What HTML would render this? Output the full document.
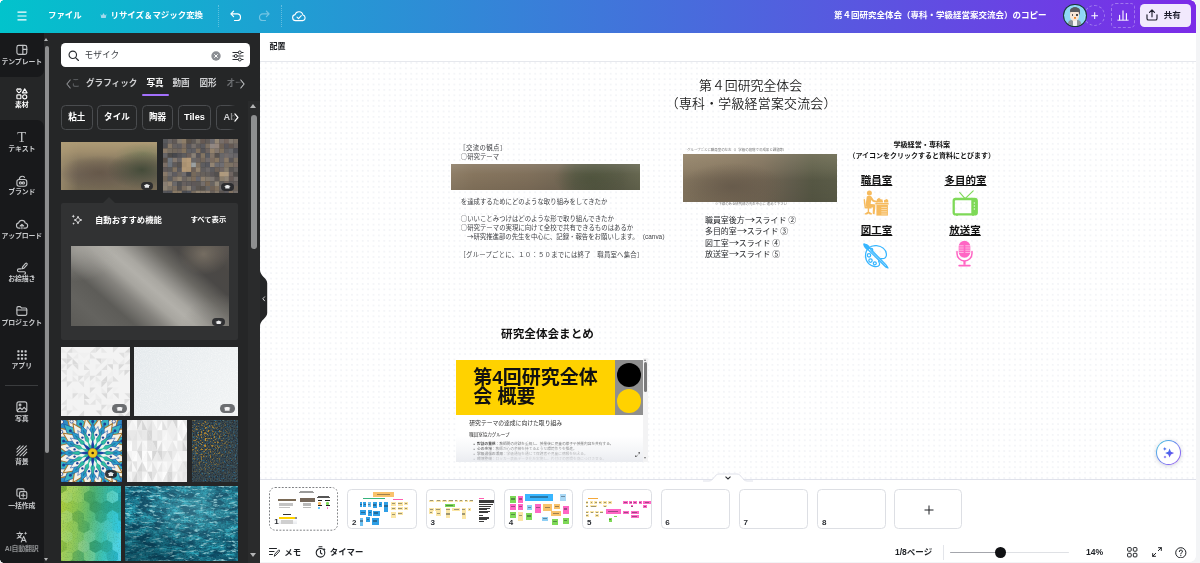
<!DOCTYPE html>
<html lang="ja">
<head>
<meta charset="utf-8">
<title>第４回研究全体会（専科・学級経営案交流会）のコピー</title>
<style>
*{box-sizing:border-box;margin:0;padding:0}
html,body{width:1200px;height:563px;overflow:hidden;background:#fff}
body{font-family:"Liberation Sans","Noto Sans CJK JP",sans-serif;color:#0e1318;position:relative}
.abs{position:absolute}
.t{position:absolute;white-space:nowrap;line-height:1}
#app{position:absolute;left:0;top:0;width:1200px;height:563px;overflow:hidden;will-change:transform}

/* top bar */
#top{left:0;top:0;width:1200px;height:33px;background:linear-gradient(90deg,#02c3cc 0%,#7c2be8 100%)}
#top .t{color:#fff;font-weight:700;font-size:8.450px}

/* left nav */
#nav{left:0;top:33px;width:43.5px;height:530px;background:#18191b}
.nv{position:absolute;left:0;width:43.5px;height:43.5px;background:#18191b}
.nv .lb{position:absolute;left:-10px;width:63.5px;text-align:center;font-size:6.9px;font-weight:700;color:#c9cbcd;line-height:1;white-space:nowrap;letter-spacing:-.1px}
.nv svg{position:absolute;left:15.900px;width:11.700px;height:11.700px;overflow:visible;margin-top:.6px}
.nv svg *{fill:none;stroke:#c3c5c7;stroke-width:1.250;stroke-linecap:round;stroke-linejoin:round}
.nv svg.act *{stroke:#fff}
#navsb{left:43.5px;top:33px;width:6.5px;height:530px;background:#252627}

/* panel */
#panel{left:50px;top:33px;width:210px;height:530px;background:#252627;overflow:hidden}

#search{left:11px;top:10px;width:189px;height:24px;background:#fff;border-radius:4.500px}
.tab{position:absolute;top:46px;font-size:8.600px;font-weight:700;color:#d0d1d3;line-height:1;white-space:nowrap}
.chip{position:absolute;top:72px;height:24.500px;border:1px solid #4a4c4f;border-radius:4.500px;color:#fff;font-size:8.600px;font-weight:700;line-height:22.500px;text-align:center;white-space:nowrap}
.pi{position:absolute;overflow:hidden}
.pro{position:absolute;width:12.800px;height:8.200px;border-radius:4.100px;background:rgba(36,38,41,.88)}
.pro:after{content:"";position:absolute;left:3.100px;top:2.200px;width:6.600px;height:3.900px;background:#e9eaeb;clip-path:polygon(50% 0,100% 40%,82% 55%,82% 100%,18% 100%,18% 55%,0 40%)}
.pro2{position:absolute;width:15px;height:8.700px;border-radius:4.400px;background:rgba(96,98,101,.92)}
.pro2:after{content:"";position:absolute;left:4.200px;top:2.300px;width:7px;height:4.200px;background:#f4f4f5;clip-path:polygon(50% 0,100% 32%,84% 45%,84% 100%,16% 100%,16% 45%,0 32%)}

/* editor */
#editor{left:260px;top:33px;width:940px;height:530px;background:#fff}
#tb{left:0;top:0;width:940px;height:28.500px;background:#fff;border-bottom:1px solid #e6e8ed}
#cv{left:0;top:28.500px;width:940px;height:418.500px;overflow:hidden;background-color:#fff;background-image:radial-gradient(circle,#eef0f4 0,#eef0f4 .5px,rgba(238,240,244,0) .95px);background-size:5.400px 5.400px;background-position:3px -1.750px}
#cv .t{color:#16181c;text-spacing-trim:space-all}
.sy{font-family:"Noto Sans CJK JP","Liberation Sans",sans-serif}
#strip{left:0;top:446px;width:940px;height:83px;overflow:visible;background:#fff;border-top:1px solid #dfe1ea}
.th{position:absolute;top:9.400px;width:69.400px;height:39.200px;border:1px solid #dddfe4;border-radius:4.500px;background:#fff;overflow:hidden}
.th b{position:absolute;left:3.800px;bottom:1px;font-size:8px;font-weight:700;color:#2c2f34;line-height:1}
.sq{position:absolute}
</style>
</head>
<body>
<div id="app">

<!-- ================= TOP BAR ================= -->
<div id="top" class="abs">
  <svg class="abs" style="left:16.5px;top:10.5px" width="10" height="10" viewBox="0 0 10 10"><path d="M.5 1.2h9M.5 5h9M.5 8.8h9" stroke="#fff" stroke-width="1.2" fill="none"/></svg>
  <div class="t" style="left:48px;top:11px">ファイル</div>
  <svg class="abs" style="left:100px;top:11.5px" width="7" height="7" viewBox="0 0 14 14"><path d="M1 4l3 3 3-5 3 5 3-3-1.4 8H2.4z" fill="#d6e4f5" opacity=".75"/></svg>
  <div class="t" style="left:110.5px;top:11px">リサイズ＆マジック変換</div>
  <div class="abs" style="left:217.500px;top:5px;width:0;height:22px;border-left:1px dotted rgba(255,255,255,.3)"></div>
  <svg class="abs" style="left:229.5px;top:10px" width="12" height="12" viewBox="0 0 12 12"><path d="M3.6 1.2L.9 3.9l2.7 2.7M1.2 3.9h6a3.3 3.3 0 010 6.6H4.5" stroke="#fff" stroke-width="1.2" fill="none" stroke-linecap="round" stroke-linejoin="round"/></svg>
  <svg class="abs" style="left:257.5px;top:10px;opacity:.38" width="12" height="12" viewBox="0 0 12 12"><path d="M8.4 1.2l2.7 2.7-2.7 2.7M10.8 3.9h-6a3.3 3.3 0 000 6.6H7.5" stroke="#fff" stroke-width="1.2" fill="none" stroke-linecap="round" stroke-linejoin="round"/></svg>
  <div class="abs" style="left:281px;top:5px;width:0;height:22px;border-left:1px dotted rgba(255,255,255,.3)"></div>
  <svg class="abs" style="left:291.5px;top:9.5px" width="14" height="12" viewBox="0 0 14 12"><path d="M3.6 10.6a3 3 0 01-.5-5.95A4 4 0 0110.9 5a2.85 2.85 0 01-.3 5.6z" stroke="#fff" stroke-width="1.1" fill="none" stroke-linejoin="round"/><path d="M5 7.2l1.5 1.5 2.8-3" stroke="#fff" stroke-width="1.1" fill="none" stroke-linecap="round" stroke-linejoin="round"/></svg>

  <div class="t" style="left:834px;top:10.700px;font-size:8.500px;text-spacing-trim:space-all">第４回研究全体会（専科・学級経営案交流会）のコピー</div>
<div class="abs" style="left:1063.100px;top:3.700px;width:23.800px;height:23.800px;border-radius:50%;background:#173a34;overflow:hidden">
    <div class="abs" style="left:1.100px;top:1.100px;width:21.600px;height:21.600px;border-radius:50%;background:#8fd8f7;overflow:hidden">
      <div class="abs" style="left:4.300px;top:15.400px;width:13px;height:9px;border-radius:4px 4px 0 0;background:#8d939b"></div>
      <div class="abs" style="left:8.800px;top:15px;width:4px;height:7px;background:#f4f4f4"></div>
      <div class="abs" style="left:5.400px;top:2.600px;width:10.800px;height:8px;border-radius:5px 5px 2px 2px;background:#5a5d61"></div>
      <div class="abs" style="left:6.300px;top:5.700px;width:9px;height:10.200px;border-radius:4px 4px 4.500px 4.500px;background:#f6e6d6"></div>
      <div class="abs" style="left:6px;top:3.400px;width:9.600px;height:3.800px;border-radius:4px 4px 1px 1px;background:#5a5d61"></div>
      <div class="abs" style="left:8px;top:9.300px;width:1.200px;height:1.600px;border-radius:50%;background:#333"></div>
      <div class="abs" style="left:12.300px;top:9.300px;width:1.200px;height:1.600px;border-radius:50%;background:#333"></div>
      <div class="abs" style="left:9.700px;top:12.600px;width:2.400px;height:2px;border-radius:0 0 1.200px 1.200px;background:#f08a2c"></div>
    </div>
  </div>
  <div class="abs" style="left:1083.800px;top:5px;width:21.200px;height:21.200px;border-radius:50%;border:1px dashed rgba(255,255,255,.32)"></div>
  <svg class="abs" style="left:1090.800px;top:12px" width="7.400" height="7.400" viewBox="0 0 8 8"><path d="M4 .4v7.200M.4 4h7.200" stroke="#fff" stroke-width="1.100"/></svg>
  <div class="abs" style="left:1111.200px;top:3.200px;width:23.800px;height:24.400px;border-radius:4.500px;border:1px dashed rgba(255,255,255,.32)"></div>
  <svg class="abs" style="left:1117px;top:9.600px" width="12" height="11" viewBox="0 0 12 11"><path d="M.4 10.200h11.200" stroke="#fff" stroke-width=".9"/><path d="M2.600 9.800V5.200M6 9.800V.8M9.400 9.800V3.600" stroke="#fff" stroke-width="1.100" stroke-linecap="round"/></svg>
  <div class="abs" style="left:1140px;top:3.800px;width:51px;height:23.600px;border-radius:4.500px;background:#f1e9fd"></div>
  <svg class="abs" style="left:1146px;top:9.400px" width="12" height="12" viewBox="0 0 12 12"><path d="M1 5.800v3.600A1.600 1.600 0 002.600 11h6.800A1.600 1.600 0 0011 9.400V5.800M6 7.800V1M3.500 3.400L6 .9l2.500 2.500" fill="none" stroke="#1d1d2b" stroke-width="1.150" stroke-linecap="round" stroke-linejoin="round"/></svg>
  <div class="t" style="left:1163.800px;top:11.100px;font-size:8.500px;color:#1d1d2b">共有</div>
</div>

<!-- ================= LEFT NAV ================= -->
<div id="nav" class="abs">
<div class="abs" style="left:0;top:0;width:43.5px;height:131px;background:#252627"></div>
<div class="nv" style="top:0px;border-bottom-right-radius:7px;"><svg viewBox="0 0 13 13" style="top:10.500px"><rect x="1" y="1.5" width="11" height="10" rx="2"/><path d="M7.6 1.5v10M7.6 6h4.4"/></svg><div class="lb" style="top:25.500px;color:#c9cbcd">テンプレート</div></div>
<div class="nv" style="top:43.5px;background:transparent;"><svg class="act" viewBox="0 0 13 13" style="top:10.500px"><path d="M3.3 5.4C1.9 4.3.9 3.5.9 2.4A1.2 1.2 0 013.3 1.9 1.2 1.2 0 015.7 2.4C5.7 3.5 4.7 4.3 3.3 5.4z"/><path d="M9.7 1l2.6 4.4H7.1z"/><rect x="1" y="7.6" width="4.4" height="4.4" rx=".6"/><circle cx="9.7" cy="9.8" r="2.3"/></svg><div class="lb" style="top:25.500px;color:#fff">素材</div></div>
<div class="nv" style="top:87px;border-top-right-radius:7px;"><div class="t" style="left:0;width:43.5px;text-align:center;top:10px;font-family:'Liberation Serif',serif;font-size:14.600px;color:#bfc1c3">T</div><div class="lb" style="top:25.500px;color:#c9cbcd">テキスト</div></div>
<div class="nv" style="top:130.5px;"><svg viewBox="0 0 13 13" style="top:10.500px"><rect x="1" y="5" width="11" height="7.5" rx="2.4"/><path d="M3.6 5c.2-2.2 1.6-3.6 3.4-3.6 1 0 1.9.4 2.5 1.200"/><circle cx="5" cy="8.8" r="1.2"/><circle cx="8.2" cy="8.8" r="1.2"/></svg><div class="lb" style="top:25.500px;color:#c9cbcd">ブランド</div></div>
<div class="nv" style="top:174px;"><svg viewBox="0 0 13 13" style="top:10.500px"><path d="M4.6 11.2H3.4a2.9 2.9 0 01-.5-5.75A3.8 3.8 0 0110.300 5.600 2.800 2.800 0 0110 11.200H8.600"/><path d="M6.6 12V7.200M4.700 8.900l1.900-1.900 1.900 1.900"/></svg><div class="lb" style="top:25.500px;color:#c9cbcd">アップロード</div></div>
<div class="nv" style="top:217.5px;"><svg viewBox="0 0 13 13" style="top:10.500px"><path d="M7.300 5.300l3.300-3.700a1.100 1.100 0 011.600 1.500L8.900 6.800l-2 .6z"/><path d="M5.800 7.600H3.200a1.600 1.600 0 000 3.200H9.300a1.300 1.300 0 010 2.600"/></svg><div class="lb" style="top:25.500px;color:#c9cbcd">お絵描き</div></div>
<div class="nv" style="top:261px;"><svg viewBox="0 0 13 13" style="top:10.500px"><path d="M1 3.200a1.400 1.400 0 011.400-1.400h2.300l1.300 1.500h4.600A1.400 1.400 0 0112 4.700v5.400a1.400 1.400 0 01-1.400 1.400H2.400A1.400 1.400 0 011 10.100z"/><path d="M1 5.600h11"/></svg><div class="lb" style="top:25.500px;color:#c9cbcd">プロジェクト</div></div>
<div class="nv" style="top:304.5px;"><svg viewBox="0 0 13 13" style="top:10.500px"><rect x="1.5" y="1.5" width="2.400" height="2.400" rx=".5" style="fill:#c9cbcd;stroke:none"/><rect x="1.5" y="5.5" width="2.400" height="2.400" rx=".5" style="fill:#c9cbcd;stroke:none"/><rect x="1.5" y="9.5" width="2.400" height="2.400" rx=".5" style="fill:#c9cbcd;stroke:none"/><rect x="5.5" y="1.5" width="2.400" height="2.400" rx=".5" style="fill:#c9cbcd;stroke:none"/><rect x="5.5" y="5.5" width="2.400" height="2.400" rx=".5" style="fill:#c9cbcd;stroke:none"/><rect x="5.5" y="9.5" width="2.400" height="2.400" rx=".5" style="fill:#c9cbcd;stroke:none"/><rect x="9.5" y="1.5" width="2.400" height="2.400" rx=".5" style="fill:#c9cbcd;stroke:none"/><rect x="9.5" y="5.5" width="2.400" height="2.400" rx=".5" style="fill:#c9cbcd;stroke:none"/><rect x="9.5" y="9.5" width="2.400" height="2.400" rx=".5" style="fill:#c9cbcd;stroke:none"/></svg><div class="lb" style="top:25.500px;color:#c9cbcd">アプリ</div></div>
<div class="nv" style="top:357px;height:44px;"><svg viewBox="0 0 13 13" style="top:10.500px"><rect x="1" y="1" width="11" height="11" rx="2.200"/><circle cx="4.500" cy="4.500" r="1"/><path d="M1.500 10.500l3-3 2.200 2.200 2.300-2.700 3 3.200"/></svg><div class="lb" style="top:25.500px;color:#c9cbcd">写真</div></div>
<div class="nv" style="top:400.5px;"><svg viewBox="0 0 13 13" style="top:10.500px"><path d="M1 4.500L4.500 1M1 8L8 1M1 11.500L11.500 1M4.500 12L12 4.500M8 12l4-4" style="stroke-width:1.200"/></svg><div class="lb" style="top:25.500px;color:#c9cbcd">背景</div></div>
<div class="nv" style="top:444px;"><svg viewBox="0 0 13 13" style="top:10.500px"><rect x="4" y="4" width="8" height="8" rx="1.600"/><path d="M2.500 9H2.200A1.200 1.200 0 011 7.800V2.200A1.200 1.200 0 012.200 1h5.600A1.200 1.200 0 019 2.200v.3"/><path d="M8 6v4M6 8h4"/></svg><div class="lb" style="top:25.500px;color:#c9cbcd">一括作成</div></div>
<div class="nv" style="top:487.29999999999995px;height:43px;"><svg viewBox="0 0 13 13" style="top:10.500px"><path d="M1 2.800h6.400M4.200 1.200v1.600M6.200 2.800C5.700 5 3.600 7.200 1.200 8M2.500 4.600c.8 1.500 2 2.600 3.500 3.300" style="stroke-width:1.200"/><path d="M5.800 12.300L8.500 6l2.700 6.300M6.700 10.400h3.600" style="stroke-width:1.200"/><path d="M10.700.6l.55 1.350 1.350.55-1.350.55-.55 1.350-.55-1.350-1.350-.55 1.350-.55z" style="fill:#c9cbcd;stroke:none"/></svg><div class="lb" style="top:25.500px;color:#8f9193">AI自動翻訳</div></div>
<div class="abs" style="left:4.500px;top:352.400px;width:33.500px;height:1px;background:#3a3c3e"></div>
</div>
<div id="navsb" class="abs">
  <div class="abs" style="left:.6px;top:4.800px;width:0;height:0;border-left:2.900px solid transparent;border-right:2.900px solid transparent;border-bottom:3.200px solid #b4b5b6"></div>
  <div class="abs" style="left:1.400px;top:12.600px;width:4px;height:407px;border-radius:2px;background:#8e8f90"></div>
  <div class="abs" style="left:.6px;top:524.500px;width:0;height:0;border-left:2.900px solid transparent;border-right:2.900px solid transparent;border-top:3.200px solid #b4b5b6"></div>
</div>

<!-- ================= SIDE PANEL ================= -->
<div id="panel" class="abs">
  <div id="search" class="abs">
    <svg class="abs" style="left:6.500px;top:6.500px" width="11.500" height="11.500" viewBox="0 0 12 12"><circle cx="5" cy="5" r="3.900" fill="none" stroke="#2a2d31" stroke-width="1.200"/><path d="M7.900 7.900l3 3" stroke="#2a2d31" stroke-width="1.300" stroke-linecap="round"/></svg>
    <div class="t" style="left:23.500px;top:7.600px;font-size:8.700px;color:#3a3d42">モザイク</div>
    <svg class="abs" style="left:149.500px;top:7.500px" width="10" height="10" viewBox="0 0 10 10"><circle cx="5" cy="5" r="4.700" fill="#8b8e93"/><path d="M3.300 3.300l3.400 3.400M6.700 3.300L3.300 6.700" stroke="#fff" stroke-width="1"/></svg>
    <svg class="abs" style="left:170.500px;top:6.500px" width="12" height="12" viewBox="0 0 12 12"><path d="M.5 2.500h11M.5 6h11M.5 9.500h11" stroke="#2a2d31" stroke-width="1" fill="none"/><circle cx="7.800" cy="2.500" r="1.500" fill="#fff" stroke="#2a2d31"/><circle cx="3.800" cy="6" r="1.500" fill="#fff" stroke="#2a2d31"/><circle cx="7.800" cy="9.500" r="1.500" fill="#fff" stroke="#2a2d31"/></svg>
  </div>
  <!-- tabs -->
  <svg class="abs" style="left:16.200px;top:45.500px" width="5" height="10" viewBox="0 0 5 10"><path d="M4.200 1L.9 5l3.300 4" fill="none" stroke="#8f9194" stroke-width="1.100" stroke-linecap="round" stroke-linejoin="round"/></svg>
  <div class="tab" style="left:21.500px;color:#55575a">こ</div>
  <div class="tab" style="left:36px">グラフィック</div>
  <div class="tab" style="left:96.500px;color:#fff">写真</div>
  <div class="tab" style="left:122.500px">動画</div>
  <div class="tab" style="left:149.500px">図形</div>
  <div class="tab" style="left:176.500px;color:#6d6f72">オー</div>
  <div class="abs" style="left:184px;top:38px;width:16px;height:22px;background:linear-gradient(90deg,rgba(37,38,39,0),#252627 60%)"></div>
  <svg class="abs" style="left:190.200px;top:45.500px" width="5" height="10" viewBox="0 0 5 10"><path d="M.8 1l3.300 4L.8 9" fill="none" stroke="#c4c6c8" stroke-width="1.100" stroke-linecap="round" stroke-linejoin="round"/></svg>
  <div class="abs" style="left:92px;top:61.200px;width:27px;height:1.600px;border-radius:1px;background:#a370fc"></div>
  <!-- chips -->
  <div class="chip" style="left:11px;width:31.500px">粘土</div>
  <div class="chip" style="left:47px;width:40px">タイル</div>
  <div class="chip" style="left:92px;width:31px">陶器</div>
  <div class="chip" style="left:128px;width:33px;font-size:9.200px">Tiles</div>
  <div class="chip" style="left:166px;width:52px;text-align:left;padding-left:6.500px;color:#cfd0d2;overflow:hidden;font-size:9.200px">Abstract</div>
  <div class="abs" style="left:179px;top:70px;width:21px;height:28px;background:linear-gradient(90deg,rgba(37,38,39,0),#252627 30%)"></div>
  <svg class="abs" style="left:184.200px;top:80px" width="5" height="9" viewBox="0 0 5 9"><path d="M.9 .9l3 3.600-3 3.600" fill="none" stroke="#fff" stroke-width="1.200" stroke-linecap="round" stroke-linejoin="round"/></svg>
  <div class="pi" style="left:11px;top:108.600px;width:96.200px;height:48.500px;background:
radial-gradient(ellipse 36% 40% at 84% 58%,rgba(66,74,56,.96),rgba(66,74,56,0) 100%),
radial-gradient(ellipse 30% 22% at 86% 24%,rgba(112,126,88,.5),rgba(112,126,88,0) 100%),
radial-gradient(ellipse 42% 36% at 40% 64%,rgba(100,86,72,.9),rgba(100,86,72,0) 100%),
linear-gradient(90deg,rgba(176,158,120,.55) 0%,rgba(176,158,120,0) 18%),
linear-gradient(180deg,#ae9b76 0%,#a08e6d 20%,#85775f 42%,#74685a 68%,#766a54 100%)"></div>
  <div class="pro" style="left:90.500px;top:148.700px"></div>
  <svg class="pi" style="left:113px;top:106.400px" width="75.200" height="53.900" viewBox="0 0 75.200 53.900"><rect x="0" y="0" width="4.9" height="4.9" fill="#57585b"/><rect x="4.7" y="0" width="4.9" height="4.9" fill="#6a6564"/><rect x="9.4" y="0" width="4.9" height="4.9" fill="#615a57"/><rect x="14.1" y="0" width="4.9" height="4.9" fill="#847b6f"/><rect x="18.8" y="0" width="4.9" height="4.9" fill="#8d7d68"/><rect x="23.5" y="0" width="4.9" height="4.9" fill="#5c534a"/><rect x="28.2" y="0" width="4.9" height="4.9" fill="#5e5956"/><rect x="32.9" y="0" width="4.9" height="4.9" fill="#797167"/><rect x="37.6" y="0" width="4.9" height="4.9" fill="#655953"/><rect x="42.3" y="0" width="4.9" height="4.9" fill="#615b58"/><rect x="47" y="0" width="4.9" height="4.9" fill="#6c6a6e"/><rect x="51.7" y="0" width="4.9" height="4.9" fill="#958876"/><rect x="56.4" y="0" width="4.9" height="4.9" fill="#776e6a"/><rect x="61.1" y="0" width="4.9" height="4.9" fill="#73655e"/><rect x="65.8" y="0" width="4.9" height="4.9" fill="#817970"/><rect x="70.5" y="0" width="4.9" height="4.9" fill="#796f65"/><rect x="0" y="4.7" width="4.9" height="4.9" fill="#535255"/><rect x="4.7" y="4.7" width="4.9" height="4.9" fill="#867867"/><rect x="9.4" y="4.7" width="4.9" height="4.9" fill="#676261"/><rect x="14.1" y="4.7" width="4.9" height="4.9" fill="#625f60"/><rect x="18.8" y="4.7" width="4.9" height="4.9" fill="#7c6e62"/><rect x="23.5" y="4.7" width="4.9" height="4.9" fill="#5a585b"/><rect x="28.2" y="4.7" width="4.9" height="4.9" fill="#766f6b"/><rect x="32.9" y="4.7" width="4.9" height="4.9" fill="#615c5b"/><rect x="37.6" y="4.7" width="4.9" height="4.9" fill="#5c5b5f"/><rect x="42.3" y="4.7" width="4.9" height="4.9" fill="#7c7063"/><rect x="47" y="4.7" width="4.9" height="4.9" fill="#5c5f67"/><rect x="51.7" y="4.7" width="4.9" height="4.9" fill="#665952"/><rect x="56.4" y="4.7" width="4.9" height="4.9" fill="#6d6156"/><rect x="61.1" y="4.7" width="4.9" height="4.9" fill="#5b585c"/><rect x="65.8" y="4.7" width="4.9" height="4.9" fill="#645953"/><rect x="70.5" y="4.7" width="4.9" height="4.9" fill="#6c6561"/><rect x="0" y="9.4" width="4.9" height="4.9" fill="#8a7a68"/><rect x="4.7" y="9.4" width="4.9" height="4.9" fill="#776e63"/><rect x="9.4" y="9.4" width="4.9" height="4.9" fill="#72685d"/><rect x="14.1" y="9.4" width="4.9" height="4.9" fill="#6f6660"/><rect x="18.8" y="9.4" width="4.9" height="4.9" fill="#83735e"/><rect x="23.5" y="9.4" width="4.9" height="4.9" fill="#616063"/><rect x="28.2" y="9.4" width="4.9" height="4.9" fill="#605f63"/><rect x="32.9" y="9.4" width="4.9" height="4.9" fill="#807160"/><rect x="37.6" y="9.4" width="4.9" height="4.9" fill="#565558"/><rect x="42.3" y="9.4" width="4.9" height="4.9" fill="#6d6460"/><rect x="47" y="9.4" width="4.9" height="4.9" fill="#94836d"/><rect x="51.7" y="9.4" width="4.9" height="4.9" fill="#81776f"/><rect x="56.4" y="9.4" width="4.9" height="4.9" fill="#7e705f"/><rect x="61.1" y="9.4" width="4.9" height="4.9" fill="#646162"/><rect x="65.8" y="9.4" width="4.9" height="4.9" fill="#69696c"/><rect x="70.5" y="9.4" width="4.9" height="4.9" fill="#4e4f55"/><rect x="0" y="14.1" width="4.9" height="4.9" fill="#686668"/><rect x="4.7" y="14.1" width="4.9" height="4.9" fill="#4d4a48"/><rect x="9.4" y="14.1" width="4.9" height="4.9" fill="#47484d"/><rect x="14.1" y="14.1" width="4.9" height="4.9" fill="#535256"/><rect x="18.8" y="14.1" width="4.9" height="4.9" fill="#5d5c5e"/><rect x="23.5" y="14.1" width="4.9" height="4.9" fill="#6b605c"/><rect x="28.2" y="14.1" width="4.9" height="4.9" fill="#898076"/><rect x="32.9" y="14.1" width="4.9" height="4.9" fill="#59565a"/><rect x="37.6" y="14.1" width="4.9" height="4.9" fill="#837563"/><rect x="42.3" y="14.1" width="4.9" height="4.9" fill="#595b61"/><rect x="47" y="14.1" width="4.9" height="4.9" fill="#817467"/><rect x="51.7" y="14.1" width="4.9" height="4.9" fill="#57524f"/><rect x="56.4" y="14.1" width="4.9" height="4.9" fill="#69686a"/><rect x="61.1" y="14.1" width="4.9" height="4.9" fill="#736c6b"/><rect x="65.8" y="14.1" width="4.9" height="4.9" fill="#6b696c"/><rect x="70.5" y="14.1" width="4.9" height="4.9" fill="#666467"/><rect x="0" y="18.8" width="4.9" height="4.9" fill="#5a5049"/><rect x="4.7" y="18.8" width="4.9" height="4.9" fill="#726b68"/><rect x="9.4" y="18.8" width="4.9" height="4.9" fill="#83786e"/><rect x="14.1" y="18.8" width="4.9" height="4.9" fill="#696566"/><rect x="18.8" y="18.8" width="4.9" height="4.9" fill="#696666"/><rect x="23.5" y="18.8" width="4.9" height="4.9" fill="#857b6e"/><rect x="28.2" y="18.8" width="4.9" height="4.9" fill="#696768"/><rect x="32.9" y="18.8" width="4.9" height="4.9" fill="#6b6360"/><rect x="37.6" y="18.8" width="4.9" height="4.9" fill="#74685c"/><rect x="42.3" y="18.8" width="4.9" height="4.9" fill="#716b6b"/><rect x="47" y="18.8" width="4.9" height="4.9" fill="#7b6d61"/><rect x="51.7" y="18.8" width="4.9" height="4.9" fill="#877763"/><rect x="56.4" y="18.8" width="4.9" height="4.9" fill="#6c686a"/><rect x="61.1" y="18.8" width="4.9" height="4.9" fill="#8a7b69"/><rect x="65.8" y="18.8" width="4.9" height="4.9" fill="#5a575a"/><rect x="70.5" y="18.8" width="4.9" height="4.9" fill="#7a7064"/><rect x="0" y="23.5" width="4.9" height="4.9" fill="#7b6f66"/><rect x="4.7" y="23.5" width="4.9" height="4.9" fill="#645f5c"/><rect x="9.4" y="23.5" width="4.9" height="4.9" fill="#5f5b5b"/><rect x="14.1" y="23.5" width="4.9" height="4.9" fill="#585451"/><rect x="18.8" y="23.5" width="4.9" height="4.9" fill="#48484c"/><rect x="23.5" y="23.5" width="4.9" height="4.9" fill="#7b7067"/><rect x="28.2" y="23.5" width="4.9" height="4.9" fill="#625b57"/><rect x="32.9" y="23.5" width="4.9" height="4.9" fill="#817363"/><rect x="37.6" y="23.5" width="4.9" height="4.9" fill="#5e5d60"/><rect x="42.3" y="23.5" width="4.9" height="4.9" fill="#58585e"/><rect x="47" y="23.5" width="4.9" height="4.9" fill="#928473"/><rect x="51.7" y="23.5" width="4.9" height="4.9" fill="#6d6c70"/><rect x="56.4" y="23.5" width="4.9" height="4.9" fill="#6f6e72"/><rect x="61.1" y="23.5" width="4.9" height="4.9" fill="#807365"/><rect x="65.8" y="23.5" width="4.9" height="4.9" fill="#7d7264"/><rect x="70.5" y="23.5" width="4.9" height="4.9" fill="#786b64"/><rect x="0" y="28.2" width="4.9" height="4.9" fill="#625b5a"/><rect x="4.7" y="28.2" width="4.9" height="4.9" fill="#5d5b5b"/><rect x="9.4" y="28.2" width="4.9" height="4.9" fill="#827462"/><rect x="14.1" y="28.2" width="4.9" height="4.9" fill="#5c5b5f"/><rect x="18.8" y="28.2" width="4.9" height="4.9" fill="#7a6f66"/><rect x="23.5" y="28.2" width="4.9" height="4.9" fill="#665e5a"/><rect x="28.2" y="28.2" width="4.9" height="4.9" fill="#6d625a"/><rect x="32.9" y="28.2" width="4.9" height="4.9" fill="#93836e"/><rect x="37.6" y="28.2" width="4.9" height="4.9" fill="#615e5f"/><rect x="42.3" y="28.2" width="4.9" height="4.9" fill="#6d6969"/><rect x="47" y="28.2" width="4.9" height="4.9" fill="#5c5b5e"/><rect x="51.7" y="28.2" width="4.9" height="4.9" fill="#6c6158"/><rect x="56.4" y="28.2" width="4.9" height="4.9" fill="#726865"/><rect x="61.1" y="28.2" width="4.9" height="4.9" fill="#867c6d"/><rect x="65.8" y="28.2" width="4.9" height="4.9" fill="#5a5655"/><rect x="70.5" y="28.2" width="4.9" height="4.9" fill="#676361"/><rect x="0" y="32.9" width="4.9" height="4.9" fill="#887969"/><rect x="4.7" y="32.9" width="4.9" height="4.9" fill="#736f6e"/><rect x="9.4" y="32.9" width="4.9" height="4.9" fill="#5e5c60"/><rect x="14.1" y="32.9" width="4.9" height="4.9" fill="#6e6660"/><rect x="18.8" y="32.9" width="4.9" height="4.9" fill="#6f6b6c"/><rect x="23.5" y="32.9" width="4.9" height="4.9" fill="#494a50"/><rect x="28.2" y="32.9" width="4.9" height="4.9" fill="#776a5b"/><rect x="32.9" y="32.9" width="4.9" height="4.9" fill="#6d655f"/><rect x="37.6" y="32.9" width="4.9" height="4.9" fill="#67615c"/><rect x="42.3" y="32.9" width="4.9" height="4.9" fill="#645f5c"/><rect x="47" y="32.9" width="4.9" height="4.9" fill="#5b5657"/><rect x="51.7" y="32.9" width="4.9" height="4.9" fill="#53504f"/><rect x="56.4" y="32.9" width="4.9" height="4.9" fill="#675e54"/><rect x="61.1" y="32.9" width="4.9" height="4.9" fill="#616164"/><rect x="65.8" y="32.9" width="4.9" height="4.9" fill="#6f6561"/><rect x="70.5" y="32.9" width="4.9" height="4.9" fill="#504c4a"/><rect x="0" y="37.6" width="4.9" height="4.9" fill="#74695c"/><rect x="4.7" y="37.6" width="4.9" height="4.9" fill="#5e5e61"/><rect x="9.4" y="37.6" width="4.9" height="4.9" fill="#7f7367"/><rect x="14.1" y="37.6" width="4.9" height="4.9" fill="#918472"/><rect x="18.8" y="37.6" width="4.9" height="4.9" fill="#6d6662"/><rect x="23.5" y="37.6" width="4.9" height="4.9" fill="#7a7267"/><rect x="28.2" y="37.6" width="4.9" height="4.9" fill="#7d6d5c"/><rect x="32.9" y="37.6" width="4.9" height="4.9" fill="#67676e"/><rect x="37.6" y="37.6" width="4.9" height="4.9" fill="#8e7f6d"/><rect x="42.3" y="37.6" width="4.9" height="4.9" fill="#81786d"/><rect x="47" y="37.6" width="4.9" height="4.9" fill="#7c7570"/><rect x="51.7" y="37.6" width="4.9" height="4.9" fill="#615b58"/><rect x="56.4" y="37.6" width="4.9" height="4.9" fill="#8b7e6c"/><rect x="61.1" y="37.6" width="4.9" height="4.9" fill="#918677"/><rect x="65.8" y="37.6" width="4.9" height="4.9" fill="#675c58"/><rect x="70.5" y="37.6" width="4.9" height="4.9" fill="#756e6b"/><rect x="0" y="42.3" width="4.9" height="4.9" fill="#897e72"/><rect x="4.7" y="42.3" width="4.9" height="4.9" fill="#958673"/><rect x="9.4" y="42.3" width="4.9" height="4.9" fill="#6a6869"/><rect x="14.1" y="42.3" width="4.9" height="4.9" fill="#515153"/><rect x="18.8" y="42.3" width="4.9" height="4.9" fill="#68615f"/><rect x="23.5" y="42.3" width="4.9" height="4.9" fill="#615d5d"/><rect x="28.2" y="42.3" width="4.9" height="4.9" fill="#5f5959"/><rect x="32.9" y="42.3" width="4.9" height="4.9" fill="#5e5a57"/><rect x="37.6" y="42.3" width="4.9" height="4.9" fill="#746e6b"/><rect x="42.3" y="42.3" width="4.9" height="4.9" fill="#786856"/><rect x="47" y="42.3" width="4.9" height="4.9" fill="#696461"/><rect x="51.7" y="42.3" width="4.9" height="4.9" fill="#918778"/><rect x="56.4" y="42.3" width="4.9" height="4.9" fill="#625f5e"/><rect x="61.1" y="42.3" width="4.9" height="4.9" fill="#756860"/><rect x="65.8" y="42.3" width="4.9" height="4.9" fill="#615c5c"/><rect x="70.5" y="42.3" width="4.9" height="4.9" fill="#655e5c"/><rect x="0" y="47" width="4.9" height="4.9" fill="#8c8273"/><rect x="4.7" y="47" width="4.9" height="4.9" fill="#7a7267"/><rect x="9.4" y="47" width="4.9" height="4.9" fill="#7b6e60"/><rect x="14.1" y="47" width="4.9" height="4.9" fill="#565250"/><rect x="18.8" y="47" width="4.9" height="4.9" fill="#7a6e61"/><rect x="23.5" y="47" width="4.9" height="4.9" fill="#8c8274"/><rect x="28.2" y="47" width="4.9" height="4.9" fill="#625f60"/><rect x="32.9" y="47" width="4.9" height="4.9" fill="#5b5550"/><rect x="37.6" y="47" width="4.9" height="4.9" fill="#59534d"/><rect x="42.3" y="47" width="4.9" height="4.9" fill="#676564"/><rect x="47" y="47" width="4.9" height="4.9" fill="#6f6257"/><rect x="51.7" y="47" width="4.9" height="4.9" fill="#7f705e"/><rect x="56.4" y="47" width="4.9" height="4.9" fill="#6b6869"/><rect x="61.1" y="47" width="4.9" height="4.9" fill="#585149"/><rect x="65.8" y="47" width="4.9" height="4.9" fill="#615e60"/><rect x="70.5" y="47" width="4.9" height="4.9" fill="#6b625a"/><rect x="0" y="51.7" width="4.9" height="4.9" fill="#555559"/><rect x="4.7" y="51.7" width="4.9" height="4.9" fill="#525359"/><rect x="9.4" y="51.7" width="4.9" height="4.9" fill="#887965"/><rect x="14.1" y="51.7" width="4.9" height="4.9" fill="#857663"/><rect x="18.8" y="51.7" width="4.9" height="4.9" fill="#4a4b50"/><rect x="23.5" y="51.7" width="4.9" height="4.9" fill="#4f525a"/><rect x="28.2" y="51.7" width="4.9" height="4.9" fill="#766b5e"/><rect x="32.9" y="51.7" width="4.9" height="4.9" fill="#8e8170"/><rect x="37.6" y="51.7" width="4.9" height="4.9" fill="#897d6f"/><rect x="42.3" y="51.7" width="4.9" height="4.9" fill="#8e8071"/><rect x="47" y="51.7" width="4.9" height="4.9" fill="#69615b"/><rect x="51.7" y="51.7" width="4.9" height="4.9" fill="#807568"/><rect x="56.4" y="51.7" width="4.9" height="4.9" fill="#5b5653"/><rect x="61.1" y="51.7" width="4.9" height="4.9" fill="#5b595d"/><rect x="65.8" y="51.7" width="4.9" height="4.9" fill="#827363"/><rect x="70.5" y="51.7" width="4.9" height="4.9" fill="#746d69"/><rect x="18.800" y="18.800" width="9.400" height="14.100" fill="#c0a27a" opacity=".8"/><rect x="56.400" y="32.900" width="9.400" height="4.700" fill="#c2a987" opacity=".8"/><rect x="28.200" y="23.500" width="4.700" height="4.700" fill="#aab2b4" opacity=".8"/><rect x="4.700" y="18.800" width="4.700" height="9.400" fill="#6f7a88" opacity=".7"/><rect x="47" y="4.700" width="9.400" height="4.700" fill="#a89a90" opacity=".7"/></svg>
  <div class="pro" style="left:171px;top:149.500px"></div>
  <div class="abs" style="left:52.800px;top:163.500px;width:0;height:0;border-left:6.500px solid transparent;border-right:6.500px solid transparent;border-bottom:6.500px solid #313233"></div>
  <div class="abs" style="left:11px;top:170px;width:177.400px;height:137.200px;background:#313233;border-radius:2px"></div>
  <svg class="abs" style="left:21px;top:180.500px" width="12" height="12" viewBox="0 0 12 12"><path d="M7 2.200l1.100 2.700 2.700 1.100-2.700 1.100L7 9.800 5.900 7.100 3.200 6l2.700-1.100z" fill="none" stroke="#e6e7e8" stroke-width=".9" stroke-linejoin="round"/><path d="M2.300.6l.5 1.200 1.200.5-1.200.5-.5 1.200-.5-1.200L.6 2.300l1.200-.5zM2.600 8.200l.4 1 1 .4-1 .4-.4 1-.4-1-1-.4 1-.4z" fill="#e6e7e8"/></svg>
  <div class="t" style="left:45px;top:182.600px;font-size:8.400px;font-weight:700;color:#fff">自動おすすめ機能</div>
  <div class="t" style="left:140.500px;top:183.200px;font-size:7.300px;font-weight:700;color:#fff">すべて表示</div>
  <div class="pi" style="left:20.500px;top:213.400px;width:158.200px;height:79.200px;background:
radial-gradient(ellipse 16% 26% at 84% 10%,rgba(132,122,108,.75),rgba(132,122,108,0) 100%),
radial-gradient(ellipse 26% 40% at 4% 4%,rgba(168,166,160,.7),rgba(168,166,160,0) 100%),
radial-gradient(ellipse 30% 40% at 100% 100%,rgba(120,118,113,.6),rgba(120,118,113,0) 100%),
linear-gradient(41deg,#5c5b57 0%,#64635f 14%,#5d5c58 26%,#85837e 37%,#a7a59f 44%,#b2b0aa 50%,#a9a7a1 55%,#8d8b86 61%,#6a6863 68%,#4a4846 77%,#4b4845 88%,#595450 100%)"></div>
  <div class="pro" style="left:162.300px;top:285.200px"></div>
  <svg class="pi" style="left:11px;top:313.6px" width="69.2" height="69.1" viewBox="0 0 69.2 69.1"><rect width="100" height="100" fill="#f3f3f3"/><path d="M0,0 5.77,5.77 0,5.77z" fill="#ececec"/><path d="M11.54,0 11.54,5.77 5.77,5.77z" fill="#dedede"/><path d="M11.54,0 17.31,5.77 11.54,5.77z" fill="#ececec"/><path d="M34.62,0 34.62,5.77 28.85,5.77z" fill="#e4e4e4"/><path d="M34.62,0 40.39,0 34.62,5.77z" fill="#dedede"/><path d="M40.39,0 46.16,5.77 40.39,5.77z" fill="#e8e8e8"/><path d="M51.93,0 57.7,0 51.93,5.77z" fill="#e0e0e0"/><path d="M69.24,0 69.24,5.77 63.47,5.77z" fill="#dadada"/><path d="M5.77,5.77 11.54,11.54 5.77,11.54z" fill="#dedede"/><path d="M17.31,5.77 17.31,11.54 11.54,11.54z" fill="#ececec"/><path d="M17.31,5.77 23.08,5.77 23.08,11.54z" fill="#f0f0f0"/><path d="M23.08,5.77 28.85,5.77 23.08,11.54z" fill="#f0f0f0"/><path d="M28.85,5.77 34.62,11.54 28.85,11.54z" fill="#e4e4e4"/><path d="M57.7,5.77 63.47,5.77 63.47,11.54z" fill="#e0e0e0"/><path d="M63.47,5.77 69.24,5.77 63.47,11.54z" fill="#ececec"/><path d="M0,11.54 5.77,11.54 5.77,17.31z" fill="#dedede"/><path d="M5.77,11.54 11.54,11.54 5.77,17.31z" fill="#dadada"/><path d="M11.54,11.54 17.31,17.31 11.54,17.31z" fill="#dadada"/><path d="M17.31,11.54 23.08,17.31 17.31,17.31z" fill="#f0f0f0"/><path d="M28.85,11.54 28.85,17.31 23.08,17.31z" fill="#ececec"/><path d="M34.62,11.54 40.39,11.54 40.39,17.31z" fill="#dadada"/><path d="M40.39,11.54 46.16,11.54 40.39,17.31z" fill="#e8e8e8"/><path d="M46.16,11.54 51.93,11.54 46.16,17.31z" fill="#f0f0f0"/><path d="M51.93,11.54 57.7,17.31 51.93,17.31z" fill="#e8e8e8"/><path d="M63.47,11.54 63.47,17.31 57.7,17.31z" fill="#ececec"/><path d="M69.24,11.54 69.24,17.31 63.47,17.31z" fill="#e0e0e0"/><path d="M0,17.31 5.77,17.31 0,23.08z" fill="#e8e8e8"/><path d="M5.77,17.31 11.54,17.31 5.77,23.08z" fill="#e0e0e0"/><path d="M11.54,17.31 17.31,17.31 17.31,23.08z" fill="#dedede"/><path d="M23.08,17.31 28.85,23.08 23.08,23.08z" fill="#e0e0e0"/><path d="M34.62,17.31 40.39,17.31 34.62,23.08z" fill="#ececec"/><path d="M46.16,17.31 46.16,23.08 40.39,23.08z" fill="#e0e0e0"/><path d="M46.16,17.31 51.93,17.31 51.93,23.08z" fill="#dadada"/><path d="M57.7,17.31 63.47,17.31 57.7,23.08z" fill="#dadada"/><path d="M69.24,17.31 69.24,23.08 63.47,23.08z" fill="#f0f0f0"/><path d="M0,23.08 5.77,23.08 5.77,28.85z" fill="#e4e4e4"/><path d="M11.54,23.08 17.31,28.85 11.54,28.85z" fill="#ececec"/><path d="M28.85,23.08 28.85,28.85 23.08,28.85z" fill="#e8e8e8"/><path d="M40.39,23.08 40.39,28.85 34.62,28.85z" fill="#e0e0e0"/><path d="M51.93,23.08 51.93,28.85 46.16,28.85z" fill="#f0f0f0"/><path d="M57.7,23.08 63.47,23.08 57.7,28.85z" fill="#e8e8e8"/><path d="M63.47,23.08 69.24,23.08 63.47,28.85z" fill="#dadada"/><path d="M5.77,28.85 5.77,34.62 0,34.62z" fill="#e4e4e4"/><path d="M11.54,28.85 17.31,34.62 11.54,34.62z" fill="#e8e8e8"/><path d="M17.31,28.85 23.08,28.85 17.31,34.62z" fill="#e0e0e0"/><path d="M23.08,28.85 28.85,28.85 23.08,34.62z" fill="#e8e8e8"/><path d="M28.85,28.85 34.62,28.85 28.85,34.62z" fill="#e0e0e0"/><path d="M34.62,28.85 40.39,34.62 34.62,34.62z" fill="#e8e8e8"/><path d="M46.16,28.85 46.16,34.62 40.39,34.62z" fill="#dadada"/><path d="M51.93,28.85 51.93,34.62 46.16,34.62z" fill="#ececec"/><path d="M51.93,28.85 57.7,34.62 51.93,34.62z" fill="#e0e0e0"/><path d="M5.77,34.62 11.54,34.62 5.77,40.39z" fill="#e0e0e0"/><path d="M17.31,34.62 23.08,34.62 23.08,40.39z" fill="#e4e4e4"/><path d="M28.85,34.62 34.62,34.62 28.85,40.39z" fill="#f0f0f0"/><path d="M34.62,34.62 40.39,34.62 40.39,40.39z" fill="#f0f0f0"/><path d="M40.39,34.62 46.16,34.62 40.39,40.39z" fill="#dadada"/><path d="M46.16,34.62 51.93,34.62 46.16,40.39z" fill="#e4e4e4"/><path d="M11.54,40.39 17.31,46.16 11.54,46.16z" fill="#f0f0f0"/><path d="M28.85,40.39 34.62,40.39 28.85,46.16z" fill="#dedede"/><path d="M40.39,40.39 46.16,46.16 40.39,46.16z" fill="#ececec"/><path d="M46.16,40.39 51.93,40.39 46.16,46.16z" fill="#dadada"/><path d="M51.93,40.39 57.7,40.39 51.93,46.16z" fill="#f0f0f0"/><path d="M5.77,46.16 11.54,51.93 5.77,51.93z" fill="#f0f0f0"/><path d="M11.54,46.16 17.31,46.16 11.54,51.93z" fill="#dedede"/><path d="M17.31,46.16 23.08,46.16 17.31,51.93z" fill="#ececec"/><path d="M23.08,46.16 28.85,51.93 23.08,51.93z" fill="#dadada"/><path d="M28.85,46.16 34.62,46.16 28.85,51.93z" fill="#f0f0f0"/><path d="M34.62,46.16 40.39,51.93 34.62,51.93z" fill="#ececec"/><path d="M40.39,46.16 46.16,46.16 46.16,51.93z" fill="#dadada"/><path d="M51.93,46.16 51.93,51.93 46.16,51.93z" fill="#f0f0f0"/><path d="M51.93,46.16 57.7,46.16 57.7,51.93z" fill="#dedede"/><path d="M63.47,46.16 69.24,46.16 69.24,51.93z" fill="#e0e0e0"/><path d="M5.77,51.93 5.77,57.7 0,57.7z" fill="#e4e4e4"/><path d="M23.08,51.93 28.85,57.7 23.08,57.7z" fill="#e0e0e0"/><path d="M34.62,51.93 34.62,57.7 28.85,57.7z" fill="#e4e4e4"/><path d="M34.62,51.93 40.39,51.93 40.39,57.7z" fill="#e8e8e8"/><path d="M63.47,51.93 69.24,51.93 63.47,57.7z" fill="#e0e0e0"/><path d="M5.77,57.7 5.77,63.47 0,63.47z" fill="#e4e4e4"/><path d="M11.54,57.7 17.31,63.47 11.54,63.47z" fill="#ececec"/><path d="M40.39,57.7 46.16,57.7 40.39,63.47z" fill="#dedede"/><path d="M46.16,57.7 51.93,57.7 46.16,63.47z" fill="#ececec"/><path d="M57.7,57.7 63.47,57.7 63.47,63.47z" fill="#e4e4e4"/><path d="M5.77,63.47 5.77,69.24 0,69.24z" fill="#f0f0f0"/><path d="M5.77,63.47 11.54,63.47 5.77,69.24z" fill="#e0e0e0"/><path d="M23.08,63.47 23.08,69.24 17.31,69.24z" fill="#dedede"/><path d="M34.62,63.47 40.39,63.47 40.39,69.24z" fill="#dadada"/><path d="M51.93,63.47 57.7,63.47 57.7,69.24z" fill="#e8e8e8"/><path d="M57.7,63.47 63.47,69.24 57.7,69.24z" fill="#dadada"/><path d="M69.24,63.47 69.24,69.24 63.47,69.24z" fill="#dadada"/></svg>
  <div class="pro2" style="left:62px;top:371.3px"></div>
  <svg class="pi" style="left:84.2px;top:313.6px" width="104" height="69.100" viewBox="0 0 104 69.100"><defs><filter color-interpolation-filters="sRGB" id="fB" x="0" y="0" width="100%" height="100%"><feTurbulence type="fractalNoise" baseFrequency=".9" numOctaves="2" seed="4"/><feColorMatrix values="0 0 0 0 1  0 0 0 0 1  0 0 0 0 1  1.600 0 0 0 -.62"/></filter><linearGradient id="gB" x1="0" y1="0" x2="1" y2=".3"><stop offset="0" stop-color="#e4e9ec"/><stop offset=".55" stop-color="#eaeef0"/><stop offset="1" stop-color="#eff2f3"/></linearGradient></defs><rect width="104" height="70" fill="url(#gB)"/><rect width="104" height="70" filter="url(#fB)" opacity=".55"/></svg>
  <div class="pro2" style="left:169.5px;top:371.3px"></div>
  <svg class="pi" style="left:11px;top:386.7px" width="60.800" height="62.100" viewBox="0 0 60.800 62.100"><rect width="61" height="63" fill="#46aacb"/><path d="M31.7,-21 38.92,-3.289 52.36,-16.89 52.26,2.236 69.88,-5.184 62.46,12.44 81.59,12.34 67.99,25.78 85.7,33 67.99,40.22 81.59,53.66 62.46,53.56 69.88,71.18 52.26,63.76 52.36,82.89 38.92,69.29 31.7,87 24.48,69.29 11.04,82.89 11.14,63.76 -6.484,71.18 0.9356,53.56 -18.19,53.66 -4.589,40.22 -22.3,33 -4.589,25.78 -18.19,12.34 0.9356,12.44 -6.484,-5.184 11.14,2.236 11.04,-16.89 24.48,-3.289z" fill="#2f8cc6" stroke="#a77a34" stroke-width="1.200"/><path d="M40.87,-13.1 43.95,3.436 57.81,-6.079 54.33,10.37 70.78,6.888 61.26,20.75 77.8,23.83 63.7,33 77.8,42.17 61.26,45.25 70.78,59.11 54.33,55.63 57.81,72.08 43.95,62.56 40.87,79.1 31.7,65 22.53,79.1 19.45,62.56 5.588,72.08 9.073,55.63 -7.379,59.11 2.136,45.25 -14.4,42.17 -0.3,33 -14.4,23.83 2.136,20.75 -7.379,6.888 9.073,10.37 5.588,-6.079 19.45,3.436 22.53,-13.1 31.7,1z" fill="#f1eee0" stroke="#a77a34" stroke-width="1.200"/><path d="M31.7,-8 37.36,4.557 47.39,-4.879 47.81,8.887 60.69,4.009 55.81,16.89 69.58,17.31 60.14,27.34 72.7,33 60.14,38.66 69.58,48.69 55.81,49.11 60.69,61.99 47.81,57.11 47.39,70.88 37.36,61.44 31.7,74 26.04,61.44 16.01,70.88 15.59,57.11 2.709,61.99 7.587,49.11 -6.179,48.69 3.257,38.66 -9.3,33 3.257,27.34 -6.179,17.31 7.587,16.89 2.709,4.009 15.59,8.887 16.01,-4.879 26.04,4.557z" fill="#37b5c6" stroke="#1d4fa0" stroke-width=".7"/><path d="M38.63,-1.818 41.46,9.441 51.42,3.483 49.73,14.97 61.22,13.28 55.26,23.24 66.52,26.07 57.2,33 66.52,39.93 55.26,42.76 61.22,52.72 49.73,51.03 51.42,62.52 41.46,56.56 38.63,67.82 31.7,58.5 24.77,67.82 21.94,56.56 11.98,62.52 13.67,51.03 2.183,52.72 8.141,42.76 -3.118,39.93 6.2,33 -3.118,26.07 8.141,23.24 2.183,13.28 13.67,14.97 11.98,3.483 21.94,9.441 24.77,-1.818 31.7,7.5z" fill="#f4f1e6" stroke="#a77a34" stroke-width="1.100"/><path d="M31.7,3 35.8,12.4 43.18,5.284 43.37,15.54 52.91,11.79 49.16,21.33 59.42,21.52 52.3,28.9 61.7,33 52.3,37.1 59.42,44.48 49.16,44.67 52.91,54.21 43.37,50.46 43.18,60.72 35.8,53.6 31.7,63 27.6,53.6 20.22,60.72 20.03,50.46 10.49,54.21 14.24,44.67 3.984,44.48 11.1,37.1 1.7,33 11.1,28.9 3.984,21.52 14.24,21.33 10.49,11.79 20.03,15.54 20.22,5.284 27.6,12.4z" fill="#2a9fc9" stroke="#1d4fa0" stroke-width=".6"/><path d="M36.97,6.519 38.78,15.91 46.7,10.55 44.78,19.92 54.15,18 48.79,25.92 58.18,27.73 50.2,33 58.18,38.27 48.79,40.08 54.15,48 44.78,46.08 46.7,55.45 38.78,50.09 36.97,59.48 31.7,51.5 26.43,59.48 24.62,50.09 16.7,55.45 18.62,46.08 9.25,48 14.61,40.08 5.219,38.27 13.2,33 5.219,27.73 14.61,25.92 9.25,18 18.62,19.92 16.7,10.55 24.62,15.91 26.43,6.519 31.7,14.5z" fill="#f7f5ec" stroke="#2a58a8" stroke-width=".6"/><path d="M31.7,8.5 34.14,20.74 41.08,10.36 38.64,22.61 49.02,15.68 42.09,26.06 54.34,23.62 43.96,30.56 56.2,33 43.96,35.44 54.34,42.38 42.09,39.94 49.02,50.32 38.64,43.39 41.08,55.64 34.14,45.26 31.7,57.5 29.26,45.26 22.32,55.64 24.76,43.39 14.38,50.32 21.31,39.94 9.065,42.38 19.44,35.44 7.2,33 19.44,30.56 9.065,23.62 21.31,26.06 14.38,15.68 24.76,22.61 22.32,10.36 29.26,20.74z" fill="#2fbfa2" stroke="#1c4aa0" stroke-width=".5"/><path d="M34.82,17.31 35.72,23.3 40.59,19.7 39.12,25.58 45,24.11 41.4,28.98 47.39,29.88 42.2,33 47.39,36.12 41.4,37.02 45,41.89 39.12,40.42 40.59,46.3 35.72,42.7 34.82,48.69 31.7,43.5 28.58,48.69 27.68,42.7 22.81,46.3 24.28,40.42 18.4,41.89 22,37.02 16.01,36.12 21.2,33 16.01,29.88 22,28.98 18.4,24.11 24.28,25.58 22.81,19.7 27.68,23.3 28.58,17.31 31.7,22.5z" fill="#eef4ee"/><path d="M31.7,18.5 33.8,27.92 41.95,22.75 36.78,30.9 46.2,33 36.78,35.1 41.95,43.25 33.8,38.08 31.7,47.5 29.6,38.08 21.45,43.25 26.62,35.1 17.2,33 26.62,30.9 21.45,22.75 29.6,27.92z" fill="#1f49a6"/><path d="M36.48,21.45 35.24,29.46 43.25,28.22 36.7,33 43.25,37.78 35.24,36.54 36.48,44.55 31.7,38 26.92,44.55 28.16,36.54 20.15,37.78 26.7,33 20.15,28.22 28.16,29.46 26.92,21.45 31.7,28z" fill="#2bb79f"/><path d="M31.7,23.5 33.42,28.84 38.42,26.28 35.86,31.28 41.2,33 35.86,34.72 38.42,39.72 33.42,37.16 31.7,42.5 29.98,37.16 24.98,39.72 27.54,34.72 22.2,33 27.54,31.28 24.98,26.28 29.98,28.84z" fill="#1c3f9a"/><circle cx="35.31" cy="14.86" r="1.200" fill="#1d3f96"/><circle cx="39.11" cy="-4.27" r="1.700" fill="#f4f1e6" stroke="#1d3f96" stroke-width=".7"/><circle cx="31.7" cy="1.5" r="1.500" fill="#1d3f96"/><circle cx="31.7" cy="-11" r="2" fill="#f4f1e6" stroke="#1d3f96" stroke-width=".8"/><circle cx="41.98" cy="17.62" r="1.200" fill="#1d3f96"/><circle cx="52.81" cy="1.404" r="1.700" fill="#f4f1e6" stroke="#1d3f96" stroke-width=".7"/><circle cx="43.75" cy="3.898" r="1.500" fill="#1d3f96"/><circle cx="48.54" cy="-7.651" r="2" fill="#f4f1e6" stroke="#1d3f96" stroke-width=".8"/><circle cx="47.08" cy="22.72" r="1.200" fill="#1d3f96"/><circle cx="63.3" cy="11.89" r="1.700" fill="#f4f1e6" stroke="#1d3f96" stroke-width=".7"/><circle cx="53.97" cy="10.73" r="1.500" fill="#1d3f96"/><circle cx="62.81" cy="1.887" r="2" fill="#f4f1e6" stroke="#1d3f96" stroke-width=".8"/><circle cx="49.84" cy="29.39" r="1.200" fill="#1d3f96"/><circle cx="68.97" cy="25.59" r="1.700" fill="#f4f1e6" stroke="#1d3f96" stroke-width=".7"/><circle cx="60.8" cy="20.95" r="1.500" fill="#1d3f96"/><circle cx="72.35" cy="16.16" r="2" fill="#f4f1e6" stroke="#1d3f96" stroke-width=".8"/><circle cx="49.84" cy="36.61" r="1.200" fill="#1d3f96"/><circle cx="68.97" cy="40.41" r="1.700" fill="#f4f1e6" stroke="#1d3f96" stroke-width=".7"/><circle cx="63.2" cy="33" r="1.500" fill="#1d3f96"/><circle cx="75.7" cy="33" r="2" fill="#f4f1e6" stroke="#1d3f96" stroke-width=".8"/><circle cx="47.08" cy="43.28" r="1.200" fill="#1d3f96"/><circle cx="63.3" cy="54.11" r="1.700" fill="#f4f1e6" stroke="#1d3f96" stroke-width=".7"/><circle cx="60.8" cy="45.05" r="1.500" fill="#1d3f96"/><circle cx="72.35" cy="49.84" r="2" fill="#f4f1e6" stroke="#1d3f96" stroke-width=".8"/><circle cx="41.98" cy="48.38" r="1.200" fill="#1d3f96"/><circle cx="52.81" cy="64.6" r="1.700" fill="#f4f1e6" stroke="#1d3f96" stroke-width=".7"/><circle cx="53.97" cy="55.27" r="1.500" fill="#1d3f96"/><circle cx="62.81" cy="64.11" r="2" fill="#f4f1e6" stroke="#1d3f96" stroke-width=".8"/><circle cx="35.31" cy="51.14" r="1.200" fill="#1d3f96"/><circle cx="39.11" cy="70.27" r="1.700" fill="#f4f1e6" stroke="#1d3f96" stroke-width=".7"/><circle cx="43.75" cy="62.1" r="1.500" fill="#1d3f96"/><circle cx="48.54" cy="73.65" r="2" fill="#f4f1e6" stroke="#1d3f96" stroke-width=".8"/><circle cx="28.09" cy="51.14" r="1.200" fill="#1d3f96"/><circle cx="24.29" cy="70.27" r="1.700" fill="#f4f1e6" stroke="#1d3f96" stroke-width=".7"/><circle cx="31.7" cy="64.5" r="1.500" fill="#1d3f96"/><circle cx="31.7" cy="77" r="2" fill="#f4f1e6" stroke="#1d3f96" stroke-width=".8"/><circle cx="21.42" cy="48.38" r="1.200" fill="#1d3f96"/><circle cx="10.59" cy="64.6" r="1.700" fill="#f4f1e6" stroke="#1d3f96" stroke-width=".7"/><circle cx="19.65" cy="62.1" r="1.500" fill="#1d3f96"/><circle cx="14.86" cy="73.65" r="2" fill="#f4f1e6" stroke="#1d3f96" stroke-width=".8"/><circle cx="16.32" cy="43.28" r="1.200" fill="#1d3f96"/><circle cx="0.1042" cy="54.11" r="1.700" fill="#f4f1e6" stroke="#1d3f96" stroke-width=".7"/><circle cx="9.426" cy="55.27" r="1.500" fill="#1d3f96"/><circle cx="0.5873" cy="64.11" r="2" fill="#f4f1e6" stroke="#1d3f96" stroke-width=".8"/><circle cx="13.56" cy="36.61" r="1.200" fill="#1d3f96"/><circle cx="-5.57" cy="40.41" r="1.700" fill="#f4f1e6" stroke="#1d3f96" stroke-width=".7"/><circle cx="2.598" cy="45.05" r="1.500" fill="#1d3f96"/><circle cx="-8.951" cy="49.84" r="2" fill="#f4f1e6" stroke="#1d3f96" stroke-width=".8"/><circle cx="13.56" cy="29.39" r="1.200" fill="#1d3f96"/><circle cx="-5.57" cy="25.59" r="1.700" fill="#f4f1e6" stroke="#1d3f96" stroke-width=".7"/><circle cx="0.2" cy="33" r="1.500" fill="#1d3f96"/><circle cx="-12.3" cy="33" r="2" fill="#f4f1e6" stroke="#1d3f96" stroke-width=".8"/><circle cx="16.32" cy="22.72" r="1.200" fill="#1d3f96"/><circle cx="0.1042" cy="11.89" r="1.700" fill="#f4f1e6" stroke="#1d3f96" stroke-width=".7"/><circle cx="2.598" cy="20.95" r="1.500" fill="#1d3f96"/><circle cx="-8.951" cy="16.16" r="2" fill="#f4f1e6" stroke="#1d3f96" stroke-width=".8"/><circle cx="21.42" cy="17.62" r="1.200" fill="#1d3f96"/><circle cx="10.59" cy="1.404" r="1.700" fill="#f4f1e6" stroke="#1d3f96" stroke-width=".7"/><circle cx="9.426" cy="10.73" r="1.500" fill="#1d3f96"/><circle cx="0.5873" cy="1.887" r="2" fill="#f4f1e6" stroke="#1d3f96" stroke-width=".8"/><circle cx="28.09" cy="14.86" r="1.200" fill="#1d3f96"/><circle cx="24.29" cy="-4.27" r="1.700" fill="#f4f1e6" stroke="#1d3f96" stroke-width=".7"/><circle cx="19.65" cy="3.898" r="1.500" fill="#1d3f96"/><circle cx="14.86" cy="-7.651" r="2" fill="#f4f1e6" stroke="#1d3f96" stroke-width=".8"/><circle cx="31.7" cy="33" r="4.500" fill="#f0c81e" stroke="#caa013" stroke-width=".6"/><circle cx="31.7" cy="33" r="1.300" fill="#3a2a10"/></svg>
  <div class="pro" style="left:54.5px;top:436.8px"></div>
  <svg class="pi" style="left:76.6px;top:386.7px" width="60.600" height="62.100" viewBox="0 0 60.600 62.100"><rect width="61" height="63" fill="#efefef"/><path d="M0,0 5.05,0 0,10.35z" fill="#e4e4e4"/><path d="M5.05,0 5.05,10.35 0,10.35z" fill="#f4f4f4"/><path d="M5.05,0 10.1,0 10.1,10.35z" fill="#f8f8f8"/><path d="M5.05,0 10.1,10.35 5.05,10.35z" fill="#f2f2f2"/><path d="M10.1,0 15.15,0 10.1,10.35z" fill="#d6d6d6"/><path d="M15.15,0 15.15,10.35 10.1,10.35z" fill="#ececec"/><path d="M15.15,0 20.2,0 20.2,10.35z" fill="#eeeeee"/><path d="M15.15,0 20.2,10.35 15.15,10.35z" fill="#d6d6d6"/><path d="M20.2,0 25.25,0 20.2,10.35z" fill="#e8e8e8"/><path d="M25.25,0 25.25,10.35 20.2,10.35z" fill="#e0e0e0"/><path d="M25.25,0 30.3,0 30.3,10.35z" fill="#f8f8f8"/><path d="M25.25,0 30.3,10.35 25.25,10.35z" fill="#ececec"/><path d="M30.3,0 35.35,0 30.3,10.35z" fill="#eeeeee"/><path d="M35.35,0 35.35,10.35 30.3,10.35z" fill="#fcfcfc"/><path d="M35.35,0 40.4,0 40.4,10.35z" fill="#f2f2f2"/><path d="M35.35,0 40.4,10.35 35.35,10.35z" fill="#e0e0e0"/><path d="M40.4,0 45.45,0 40.4,10.35z" fill="#e4e4e4"/><path d="M45.45,0 45.45,10.35 40.4,10.35z" fill="#eeeeee"/><path d="M45.45,0 50.5,0 50.5,10.35z" fill="#d6d6d6"/><path d="M45.45,0 50.5,10.35 45.45,10.35z" fill="#eeeeee"/><path d="M50.5,0 55.55,0 50.5,10.35z" fill="#fcfcfc"/><path d="M55.55,0 55.55,10.35 50.5,10.35z" fill="#f4f4f4"/><path d="M55.55,0 60.6,0 60.6,10.35z" fill="#e8e8e8"/><path d="M55.55,0 60.6,10.35 55.55,10.35z" fill="#fcfcfc"/><path d="M0,10.35 5.05,10.35 5.05,20.7z" fill="#e8e8e8"/><path d="M0,10.35 5.05,20.7 0,20.7z" fill="#e0e0e0"/><path d="M5.05,10.35 10.1,10.35 5.05,20.7z" fill="#e8e8e8"/><path d="M10.1,10.35 10.1,20.7 5.05,20.7z" fill="#e4e4e4"/><path d="M10.1,10.35 15.15,10.35 15.15,20.7z" fill="#e4e4e4"/><path d="M10.1,10.35 15.15,20.7 10.1,20.7z" fill="#ececec"/><path d="M15.15,10.35 20.2,10.35 15.15,20.7z" fill="#e8e8e8"/><path d="M20.2,10.35 20.2,20.7 15.15,20.7z" fill="#e8e8e8"/><path d="M20.2,10.35 25.25,10.35 25.25,20.7z" fill="#d6d6d6"/><path d="M20.2,10.35 25.25,20.7 20.2,20.7z" fill="#d6d6d6"/><path d="M25.25,10.35 30.3,10.35 25.25,20.7z" fill="#eeeeee"/><path d="M30.3,10.35 30.3,20.7 25.25,20.7z" fill="#eeeeee"/><path d="M30.3,10.35 35.35,10.35 35.35,20.7z" fill="#e8e8e8"/><path d="M30.3,10.35 35.35,20.7 30.3,20.7z" fill="#e8e8e8"/><path d="M35.35,10.35 40.4,10.35 35.35,20.7z" fill="#f4f4f4"/><path d="M40.4,10.35 40.4,20.7 35.35,20.7z" fill="#f8f8f8"/><path d="M40.4,10.35 45.45,10.35 45.45,20.7z" fill="#eeeeee"/><path d="M40.4,10.35 45.45,20.7 40.4,20.7z" fill="#f2f2f2"/><path d="M45.45,10.35 50.5,10.35 45.45,20.7z" fill="#eeeeee"/><path d="M50.5,10.35 50.5,20.7 45.45,20.7z" fill="#e8e8e8"/><path d="M50.5,10.35 55.55,10.35 55.55,20.7z" fill="#eeeeee"/><path d="M50.5,10.35 55.55,20.7 50.5,20.7z" fill="#fcfcfc"/><path d="M55.55,10.35 60.6,10.35 55.55,20.7z" fill="#f4f4f4"/><path d="M60.6,10.35 60.6,20.7 55.55,20.7z" fill="#d6d6d6"/><path d="M0,20.7 5.05,20.7 0,31.05z" fill="#f8f8f8"/><path d="M5.05,20.7 5.05,31.05 0,31.05z" fill="#fcfcfc"/><path d="M5.05,20.7 10.1,20.7 10.1,31.05z" fill="#e8e8e8"/><path d="M5.05,20.7 10.1,31.05 5.05,31.05z" fill="#e8e8e8"/><path d="M10.1,20.7 15.15,20.7 10.1,31.05z" fill="#f4f4f4"/><path d="M15.15,20.7 15.15,31.05 10.1,31.05z" fill="#e0e0e0"/><path d="M15.15,20.7 20.2,20.7 20.2,31.05z" fill="#f8f8f8"/><path d="M15.15,20.7 20.2,31.05 15.15,31.05z" fill="#f4f4f4"/><path d="M20.2,20.7 25.25,20.7 20.2,31.05z" fill="#e4e4e4"/><path d="M25.25,20.7 25.25,31.05 20.2,31.05z" fill="#e4e4e4"/><path d="M25.25,20.7 30.3,20.7 30.3,31.05z" fill="#d6d6d6"/><path d="M25.25,20.7 30.3,31.05 25.25,31.05z" fill="#e4e4e4"/><path d="M30.3,20.7 35.35,20.7 30.3,31.05z" fill="#f8f8f8"/><path d="M35.35,20.7 35.35,31.05 30.3,31.05z" fill="#e0e0e0"/><path d="M35.35,20.7 40.4,20.7 40.4,31.05z" fill="#f4f4f4"/><path d="M35.35,20.7 40.4,31.05 35.35,31.05z" fill="#f8f8f8"/><path d="M40.4,20.7 45.45,20.7 40.4,31.05z" fill="#f4f4f4"/><path d="M45.45,20.7 45.45,31.05 40.4,31.05z" fill="#ececec"/><path d="M45.45,20.7 50.5,20.7 50.5,31.05z" fill="#f8f8f8"/><path d="M45.45,20.7 50.5,31.05 45.45,31.05z" fill="#e8e8e8"/><path d="M50.5,20.7 55.55,20.7 50.5,31.05z" fill="#ececec"/><path d="M55.55,20.7 55.55,31.05 50.5,31.05z" fill="#ececec"/><path d="M55.55,20.7 60.6,20.7 60.6,31.05z" fill="#e8e8e8"/><path d="M55.55,20.7 60.6,31.05 55.55,31.05z" fill="#d6d6d6"/><path d="M0,31.05 5.05,31.05 5.05,41.4z" fill="#f4f4f4"/><path d="M0,31.05 5.05,41.4 0,41.4z" fill="#d6d6d6"/><path d="M5.05,31.05 10.1,31.05 5.05,41.4z" fill="#f8f8f8"/><path d="M10.1,31.05 10.1,41.4 5.05,41.4z" fill="#fcfcfc"/><path d="M10.1,31.05 15.15,31.05 15.15,41.4z" fill="#d6d6d6"/><path d="M10.1,31.05 15.15,41.4 10.1,41.4z" fill="#f2f2f2"/><path d="M15.15,31.05 20.2,31.05 15.15,41.4z" fill="#fcfcfc"/><path d="M20.2,31.05 20.2,41.4 15.15,41.4z" fill="#f8f8f8"/><path d="M20.2,31.05 25.25,31.05 25.25,41.4z" fill="#fcfcfc"/><path d="M20.2,31.05 25.25,41.4 20.2,41.4z" fill="#e4e4e4"/><path d="M25.25,31.05 30.3,31.05 25.25,41.4z" fill="#d6d6d6"/><path d="M30.3,31.05 30.3,41.4 25.25,41.4z" fill="#ececec"/><path d="M30.3,31.05 35.35,31.05 35.35,41.4z" fill="#d6d6d6"/><path d="M30.3,31.05 35.35,41.4 30.3,41.4z" fill="#e8e8e8"/><path d="M35.35,31.05 40.4,31.05 35.35,41.4z" fill="#e4e4e4"/><path d="M40.4,31.05 40.4,41.4 35.35,41.4z" fill="#eeeeee"/><path d="M40.4,31.05 45.45,31.05 45.45,41.4z" fill="#e0e0e0"/><path d="M40.4,31.05 45.45,41.4 40.4,41.4z" fill="#eeeeee"/><path d="M45.45,31.05 50.5,31.05 45.45,41.4z" fill="#ececec"/><path d="M50.5,31.05 50.5,41.4 45.45,41.4z" fill="#f8f8f8"/><path d="M50.5,31.05 55.55,31.05 55.55,41.4z" fill="#f2f2f2"/><path d="M50.5,31.05 55.55,41.4 50.5,41.4z" fill="#f8f8f8"/><path d="M55.55,31.05 60.6,31.05 55.55,41.4z" fill="#f2f2f2"/><path d="M60.6,31.05 60.6,41.4 55.55,41.4z" fill="#f4f4f4"/><path d="M0,41.4 5.05,41.4 0,51.75z" fill="#ececec"/><path d="M5.05,41.4 5.05,51.75 0,51.75z" fill="#e0e0e0"/><path d="M5.05,41.4 10.1,41.4 10.1,51.75z" fill="#e4e4e4"/><path d="M5.05,41.4 10.1,51.75 5.05,51.75z" fill="#f8f8f8"/><path d="M10.1,41.4 15.15,41.4 10.1,51.75z" fill="#f4f4f4"/><path d="M15.15,41.4 15.15,51.75 10.1,51.75z" fill="#d6d6d6"/><path d="M15.15,41.4 20.2,41.4 20.2,51.75z" fill="#fcfcfc"/><path d="M15.15,41.4 20.2,51.75 15.15,51.75z" fill="#e0e0e0"/><path d="M20.2,41.4 25.25,41.4 20.2,51.75z" fill="#eeeeee"/><path d="M25.25,41.4 25.25,51.75 20.2,51.75z" fill="#f8f8f8"/><path d="M25.25,41.4 30.3,41.4 30.3,51.75z" fill="#f2f2f2"/><path d="M25.25,41.4 30.3,51.75 25.25,51.75z" fill="#e4e4e4"/><path d="M30.3,41.4 35.35,41.4 30.3,51.75z" fill="#f8f8f8"/><path d="M35.35,41.4 35.35,51.75 30.3,51.75z" fill="#e8e8e8"/><path d="M35.35,41.4 40.4,41.4 40.4,51.75z" fill="#f8f8f8"/><path d="M35.35,41.4 40.4,51.75 35.35,51.75z" fill="#f4f4f4"/><path d="M40.4,41.4 45.45,41.4 40.4,51.75z" fill="#f2f2f2"/><path d="M45.45,41.4 45.45,51.75 40.4,51.75z" fill="#e0e0e0"/><path d="M45.45,41.4 50.5,41.4 50.5,51.75z" fill="#f4f4f4"/><path d="M45.45,41.4 50.5,51.75 45.45,51.75z" fill="#f8f8f8"/><path d="M50.5,41.4 55.55,41.4 50.5,51.75z" fill="#f4f4f4"/><path d="M55.55,41.4 55.55,51.75 50.5,51.75z" fill="#e8e8e8"/><path d="M55.55,41.4 60.6,41.4 60.6,51.75z" fill="#e0e0e0"/><path d="M55.55,41.4 60.6,51.75 55.55,51.75z" fill="#e8e8e8"/><path d="M0,51.75 5.05,51.75 5.05,62.1z" fill="#f4f4f4"/><path d="M0,51.75 5.05,62.1 0,62.1z" fill="#ececec"/><path d="M5.05,51.75 10.1,51.75 5.05,62.1z" fill="#e8e8e8"/><path d="M10.1,51.75 10.1,62.1 5.05,62.1z" fill="#d6d6d6"/><path d="M10.1,51.75 15.15,51.75 15.15,62.1z" fill="#e0e0e0"/><path d="M10.1,51.75 15.15,62.1 10.1,62.1z" fill="#e4e4e4"/><path d="M15.15,51.75 20.2,51.75 15.15,62.1z" fill="#f2f2f2"/><path d="M20.2,51.75 20.2,62.1 15.15,62.1z" fill="#fcfcfc"/><path d="M20.2,51.75 25.25,51.75 25.25,62.1z" fill="#d6d6d6"/><path d="M20.2,51.75 25.25,62.1 20.2,62.1z" fill="#eeeeee"/><path d="M25.25,51.75 30.3,51.75 25.25,62.1z" fill="#e4e4e4"/><path d="M30.3,51.75 30.3,62.1 25.25,62.1z" fill="#f8f8f8"/><path d="M30.3,51.75 35.35,51.75 35.35,62.1z" fill="#f4f4f4"/><path d="M30.3,51.75 35.35,62.1 30.3,62.1z" fill="#ececec"/><path d="M35.35,51.75 40.4,51.75 35.35,62.1z" fill="#fcfcfc"/><path d="M40.4,51.75 40.4,62.1 35.35,62.1z" fill="#e8e8e8"/><path d="M40.4,51.75 45.45,51.75 45.45,62.1z" fill="#d6d6d6"/><path d="M40.4,51.75 45.45,62.1 40.4,62.1z" fill="#d6d6d6"/><path d="M45.45,51.75 50.5,51.75 45.45,62.1z" fill="#ececec"/><path d="M50.5,51.75 50.5,62.1 45.45,62.1z" fill="#f8f8f8"/><path d="M50.5,51.75 55.55,51.75 55.55,62.1z" fill="#eeeeee"/><path d="M50.5,51.75 55.55,62.1 50.5,62.1z" fill="#e8e8e8"/><path d="M55.55,51.75 60.6,51.75 55.55,62.1z" fill="#e4e4e4"/><path d="M60.6,51.75 60.6,62.1 55.55,62.1z" fill="#e8e8e8"/></svg>
  <svg class="pi" style="left:142px;top:386.7px" width="46" height="62.100" viewBox="0 0 46 62.100"><defs>
<filter color-interpolation-filters="sRGB" id="fE1" x="0" y="0" width="100%" height="100%"><feTurbulence type="fractalNoise" baseFrequency=".55" numOctaves="2" seed="8"/><feColorMatrix values="0 0 0 0 .8  0 0 0 0 .58  0 0 0 0 .16  6 0 0 0 -3.250"/></filter>
<filter color-interpolation-filters="sRGB" id="fE2" x="0" y="0" width="100%" height="100%"><feTurbulence type="fractalNoise" baseFrequency=".6" numOctaves="2" seed="21"/><feColorMatrix values="0 0 0 0 .17  0 0 0 0 .42  0 0 0 0 .56  0 5 0 0 -2.850"/></filter>
<filter color-interpolation-filters="sRGB" id="fE3" x="0" y="0" width="100%" height="100%"><feTurbulence type="fractalNoise" baseFrequency=".7" numOctaves="1" seed="33"/><feColorMatrix values="0 0 0 0 .14  0 0 0 0 .18  0 0 0 0 .22  0 0 4 0 -1.800"/></filter>
<filter color-interpolation-filters="sRGB" id="fE4" x="0" y="0" width="100%" height="100%"><feTurbulence type="fractalNoise" baseFrequency=".08" numOctaves="2" seed="3"/><feColorMatrix values="0 0 0 0 1  0 0 0 0 1  0 0 0 0 1  7 0 0 0 -3.200"/></filter>
<radialGradient id="mE2" cx=".3" cy=".32" r=".6"><stop offset="0" stop-color="#fff"/><stop offset=".55" stop-color="#fff" stop-opacity=".6"/><stop offset="1" stop-color="#fff" stop-opacity=".12"/></radialGradient><mask id="kE"><rect width="46" height="63" fill="#000"/><rect width="46" height="63" fill="url(#mE2)"/></mask></defs>
<rect width="46" height="63" fill="#37474f"/><rect width="46" height="63" filter="url(#fE2)"/><rect width="46" height="63" filter="url(#fE3)"/><g mask="url(#kE)"><rect width="46" height="63" filter="url(#fE1)"/></g></svg>
  <svg class="pi" style="left:11px;top:453px" width="60" height="75" viewBox="0 0 60 75"><defs><linearGradient id="gF" x1="0" y1=".42" x2="1" y2=".55"><stop offset="0" stop-color="#aacb40"/><stop offset=".25" stop-color="#88c452"/><stop offset=".5" stop-color="#58ba7a"/><stop offset=".75" stop-color="#3cc2b8"/><stop offset="1" stop-color="#31c9e6"/></linearGradient>
<filter color-interpolation-filters="sRGB" id="fF" x="0" y="0" width="100%" height="100%"><feTurbulence type="fractalNoise" baseFrequency=".8" numOctaves="1" seed="2"/><feColorMatrix values="0 0 0 0 .1  0 0 0 0 .35  0 0 0 0 .2  2.500 0 0 0 -1.200"/></filter></defs>
<rect width="60" height="75" fill="url(#gF)"/><path d="M0,-5.6 5.716,-2.3 5.716,4.3 8.083e-16,7.6 -5.716,4.3 -5.716,-2.3z" fill="#116b3a" fill-opacity="0.28"/><path d="M11.43,-5.6 17.15,-2.3 17.15,4.3 11.43,7.6 5.716,4.3 5.716,-2.3z" fill="#e6ffc0" fill-opacity="0.18"/><path d="M22.86,-5.6 28.58,-2.3 28.58,4.3 22.86,7.6 17.15,4.3 17.15,-2.3z" fill="#ffffff" fill-opacity="0.06"/><path d="M34.29,-5.6 40.01,-2.3 40.01,4.3 34.29,7.6 28.58,4.3 28.58,-2.3z" fill="#0b7048" fill-opacity="0.12"/><path d="M45.73,-5.6 51.44,-2.3 51.44,4.3 45.73,7.6 40.01,4.3 40.01,-2.3z" fill="#116b3a" fill-opacity="0.12"/><path d="M57.16,-5.6 62.87,-2.3 62.87,4.3 57.16,7.6 51.44,4.3 51.44,-2.3z" fill="#0b7048" fill-opacity="0.2"/><path d="M5.716,4.3 11.43,7.6 11.43,14.2 5.716,17.5 8.882e-16,14.2 -3.553e-15,7.6z" fill="#c8fff0" fill-opacity="0.18"/><path d="M17.15,4.3 22.86,7.6 22.86,14.2 17.15,17.5 11.43,14.2 11.43,7.6z" fill="#e6ffc0" fill-opacity="0.12"/><path d="M28.58,4.3 34.29,7.6 34.29,14.2 28.58,17.5 22.86,14.2 22.86,7.6z" fill="#0a6a3c" fill-opacity="0.28"/><path d="M40.01,4.3 45.73,7.6 45.73,14.2 40.01,17.5 34.29,14.2 34.29,7.6z" fill="#0a6a3c" fill-opacity="0.12"/><path d="M51.44,4.3 57.16,7.6 57.16,14.2 51.44,17.5 45.73,14.2 45.73,7.6z" fill="#e6ffc0" fill-opacity="0.18"/><path d="M62.87,4.3 68.59,7.6 68.59,14.2 62.87,17.5 57.16,14.2 57.16,7.6z" fill="#0c6a60" fill-opacity="0.36"/><path d="M0,14.2 5.716,17.5 5.716,24.1 8.083e-16,27.4 -5.716,24.1 -5.716,17.5z" fill="#e6ffc0" fill-opacity="0"/><path d="M11.43,14.2 17.15,17.5 17.15,24.1 11.43,27.4 5.716,24.1 5.716,17.5z" fill="#e6ffc0" fill-opacity="0"/><path d="M22.86,14.2 28.58,17.5 28.58,24.1 22.86,27.4 17.15,24.1 17.15,17.5z" fill="#e6ffc0" fill-opacity="0"/><path d="M34.29,14.2 40.01,17.5 40.01,24.1 34.29,27.4 28.58,24.1 28.58,17.5z" fill="#116b3a" fill-opacity="0.36"/><path d="M45.73,14.2 51.44,17.5 51.44,24.1 45.73,27.4 40.01,24.1 40.01,17.5z" fill="#0b7048" fill-opacity="0.36"/><path d="M57.16,14.2 62.87,17.5 62.87,24.1 57.16,27.4 51.44,24.1 51.44,17.5z" fill="#116b3a" fill-opacity="0.36"/><path d="M5.716,24.1 11.43,27.4 11.43,34 5.716,37.3 8.882e-16,34 -3.553e-15,27.4z" fill="#c8fff0" fill-opacity="0.18"/><path d="M17.15,24.1 22.86,27.4 22.86,34 17.15,37.3 11.43,34 11.43,27.4z" fill="#0a6a3c" fill-opacity="0.2"/><path d="M28.58,24.1 34.29,27.4 34.29,34 28.58,37.3 22.86,34 22.86,27.4z" fill="#c8fff0" fill-opacity="0"/><path d="M40.01,24.1 45.73,27.4 45.73,34 40.01,37.3 34.29,34 34.29,27.4z" fill="#0b7048" fill-opacity="0.28"/><path d="M51.44,24.1 57.16,27.4 57.16,34 51.44,37.3 45.73,34 45.73,27.4z" fill="#ffffff" fill-opacity="0"/><path d="M62.87,24.1 68.59,27.4 68.59,34 62.87,37.3 57.16,34 57.16,27.4z" fill="#0b7048" fill-opacity="0.28"/><path d="M0,34 5.716,37.3 5.716,43.9 8.083e-16,47.2 -5.716,43.9 -5.716,37.3z" fill="#c8fff0" fill-opacity="0.12"/><path d="M11.43,34 17.15,37.3 17.15,43.9 11.43,47.2 5.716,43.9 5.716,37.3z" fill="#c8fff0" fill-opacity="0.06"/><path d="M22.86,34 28.58,37.3 28.58,43.9 22.86,47.2 17.15,43.9 17.15,37.3z" fill="#0a6a3c" fill-opacity="0.2"/><path d="M34.29,34 40.01,37.3 40.01,43.9 34.29,47.2 28.58,43.9 28.58,37.3z" fill="#c8fff0" fill-opacity="0.06"/><path d="M45.73,34 51.44,37.3 51.44,43.9 45.73,47.2 40.01,43.9 40.01,37.3z" fill="#ffffff" fill-opacity="0.06"/><path d="M57.16,34 62.87,37.3 62.87,43.9 57.16,47.2 51.44,43.9 51.44,37.3z" fill="#e6ffc0" fill-opacity="0"/><path d="M5.716,43.9 11.43,47.2 11.43,53.8 5.716,57.1 8.882e-16,53.8 -3.553e-15,47.2z" fill="#c8fff0" fill-opacity="0.18"/><path d="M17.15,43.9 22.86,47.2 22.86,53.8 17.15,57.1 11.43,53.8 11.43,47.2z" fill="#e6ffc0" fill-opacity="0.06"/><path d="M28.58,43.9 34.29,47.2 34.29,53.8 28.58,57.1 22.86,53.8 22.86,47.2z" fill="#c8fff0" fill-opacity="0.18"/><path d="M40.01,43.9 45.73,47.2 45.73,53.8 40.01,57.1 34.29,53.8 34.29,47.2z" fill="#c8fff0" fill-opacity="0"/><path d="M51.44,43.9 57.16,47.2 57.16,53.8 51.44,57.1 45.73,53.8 45.73,47.2z" fill="#e6ffc0" fill-opacity="0.12"/><path d="M62.87,43.9 68.59,47.2 68.59,53.8 62.87,57.1 57.16,53.8 57.16,47.2z" fill="#e6ffc0" fill-opacity="0.18"/><path d="M0,53.8 5.716,57.1 5.716,63.7 8.083e-16,67 -5.716,63.7 -5.716,57.1z" fill="#116b3a" fill-opacity="0.12"/><path d="M11.43,53.8 17.15,57.1 17.15,63.7 11.43,67 5.716,63.7 5.716,57.1z" fill="#ffffff" fill-opacity="0.06"/><path d="M22.86,53.8 28.58,57.1 28.58,63.7 22.86,67 17.15,63.7 17.15,57.1z" fill="#ffffff" fill-opacity="0.18"/><path d="M34.29,53.8 40.01,57.1 40.01,63.7 34.29,67 28.58,63.7 28.58,57.1z" fill="#0b7048" fill-opacity="0.36"/><path d="M45.73,53.8 51.44,57.1 51.44,63.7 45.73,67 40.01,63.7 40.01,57.1z" fill="#0b7048" fill-opacity="0.28"/><path d="M57.16,53.8 62.87,57.1 62.87,63.7 57.16,67 51.44,63.7 51.44,57.1z" fill="#c8fff0" fill-opacity="0.18"/><path d="M5.716,63.7 11.43,67 11.43,73.6 5.716,76.9 8.882e-16,73.6 -3.553e-15,67z" fill="#c8fff0" fill-opacity="0.12"/><path d="M17.15,63.7 22.86,67 22.86,73.6 17.15,76.9 11.43,73.6 11.43,67z" fill="#0c6a60" fill-opacity="0.2"/><path d="M28.58,63.7 34.29,67 34.29,73.6 28.58,76.9 22.86,73.6 22.86,67z" fill="#e6ffc0" fill-opacity="0.18"/><path d="M40.01,63.7 45.73,67 45.73,73.6 40.01,76.9 34.29,73.6 34.29,67z" fill="#ffffff" fill-opacity="0"/><path d="M51.44,63.7 57.16,67 57.16,73.6 51.44,76.9 45.73,73.6 45.73,67z" fill="#0c6a60" fill-opacity="0.2"/><path d="M62.87,63.7 68.59,67 68.59,73.6 62.87,76.9 57.16,73.6 57.16,67z" fill="#ffffff" fill-opacity="0.18"/><path d="M0,73.6 5.716,76.9 5.716,83.5 8.083e-16,86.8 -5.716,83.5 -5.716,76.9z" fill="#116b3a" fill-opacity="0.2"/><path d="M11.43,73.6 17.15,76.9 17.15,83.5 11.43,86.8 5.716,83.5 5.716,76.9z" fill="#0a6a3c" fill-opacity="0.36"/><path d="M22.86,73.6 28.58,76.9 28.58,83.5 22.86,86.8 17.15,83.5 17.15,76.9z" fill="#0a6a3c" fill-opacity="0.36"/><path d="M34.29,73.6 40.01,76.9 40.01,83.5 34.29,86.8 28.58,83.5 28.58,76.9z" fill="#e6ffc0" fill-opacity="0"/><path d="M45.73,73.6 51.44,76.9 51.44,83.5 45.73,86.8 40.01,83.5 40.01,76.9z" fill="#e6ffc0" fill-opacity="0.12"/><path d="M57.16,73.6 62.87,76.9 62.87,83.5 57.16,86.8 51.44,83.5 51.44,76.9z" fill="#c8fff0" fill-opacity="0.18"/><rect width="60" height="75" filter="url(#fF)" opacity=".22"/></svg>
  <svg class="pi" style="left:75.4px;top:453px" width="112.600" height="75" viewBox="0 0 112.600 75"><defs>
<filter color-interpolation-filters="sRGB" id="fG1" x="0" y="0" width="100%" height="100%"><feTurbulence type="fractalNoise" baseFrequency=".16 .42" numOctaves="3" seed="5"/><feColorMatrix values="0 0 0 0 .66  0 0 0 0 .86  0 0 0 0 .88  4.200 0 0 0 -2.300"/></filter>
<filter color-interpolation-filters="sRGB" id="fG2" x="0" y="0" width="100%" height="100%"><feTurbulence type="fractalNoise" baseFrequency=".07 .16" numOctaves="3" seed="14"/><feColorMatrix values="0 0 0 0 .05  0 0 0 0 .3  0 0 0 0 .4  0 4.400 0 0 -1.950"/></filter>
<filter color-interpolation-filters="sRGB" id="fG3" x="0" y="0" width="100%" height="100%"><feTurbulence type="fractalNoise" baseFrequency=".55 .8" numOctaves="1" seed="6"/><feColorMatrix values="0 0 0 0 .04  0 0 0 0 .22  0 0 0 0 .3  0 0 3 0 -1.300"/></filter>
<filter color-interpolation-filters="sRGB" id="fG4" x="0" y="0" width="100%" height="100%"><feTurbulence type="fractalNoise" baseFrequency=".09 .2" numOctaves="2" seed="41"/><feColorMatrix values="0 0 0 0 .2  0 0 0 0 .72  0 0 0 0 .8  0 0 4 0 -1.900"/></filter>
<radialGradient id="oG1" cx=".6" cy=".3" r=".55"><stop offset="0" stop-color="#8fd6e0" stop-opacity=".28"/><stop offset="1" stop-color="#8fd6e0" stop-opacity="0"/></radialGradient><radialGradient id="oG2" cx=".12" cy=".95" r=".6"><stop offset="0" stop-color="#04303f" stop-opacity=".55"/><stop offset="1" stop-color="#04303f" stop-opacity="0"/></radialGradient><linearGradient id="gG" x1="0" y1="0" x2="1" y2="1"><stop offset="0" stop-color="#1a7790"/><stop offset=".5" stop-color="#1f8499"/><stop offset="1" stop-color="#15667c"/></linearGradient></defs>
<rect width="113" height="75" fill="url(#gG)"/><rect width="113" height="75" filter="url(#fG4)" opacity=".8"/><rect width="113" height="75" filter="url(#fG2)"/><rect width="113" height="75" filter="url(#fG3)" opacity=".55"/><rect width="113" height="75" filter="url(#fG1)" opacity=".8"/><rect width="113" height="75" fill="url(#oG1)"/><rect width="113" height="75" fill="url(#oG2)"/></svg>
  <!-- panel scrollbar -->
  <div class="abs" style="left:197.500px;top:68px;width:12.500px;height:462px;background:#2a2b2c"></div>
  <div class="abs" style="left:199.900px;top:71.200px;width:0;height:0;border-left:3.800px solid transparent;border-right:3.800px solid transparent;border-bottom:4.200px solid #b4b5b6"></div>
  <div class="abs" style="left:200.600px;top:81.500px;width:6.200px;height:134.500px;border-radius:3.100px;background:#8e8f90"></div>
  <div class="abs" style="left:199.900px;top:519.500px;width:0;height:0;border-left:3.800px solid transparent;border-right:3.800px solid transparent;border-top:4.200px solid #b4b5b6"></div>
</div>

<!-- ================= EDITOR ================= -->
<div id="editor" class="abs">
  <div id="tb" class="abs"><div class="t" style="left:9.500px;top:10.400px;font-size:8px;font-weight:700;color:#16181c">配置</div></div>
  <div id="cv" class="abs">
  <div class="t" style="left:340.6px;width:300px;text-align:center;top:18.725px;font-size:12.900px;color:#1e1e1e;font-weight:350">第４回研究全体会</div>
  <div class="t" style="left:340.6px;width:300px;text-align:center;top:36.325px;font-size:12.900px;color:#1e1e1e;font-weight:350;letter-spacing:.25px;margin-left:.6px">（専科・学級経営案交流会）</div>
  <div class="t" style="left:199.2px;top:83.22px;font-size:6.400px;color:#404246;letter-spacing:.35px">［交流の観点］</div>
  <div class="t" style="left:200.8px;top:92.925px;font-size:6.400px;color:#404246"><span class="sy">○</span>研究テーマ</div>
  <div class="abs" style="left:191px;top:102.4px;width:188.800px;height:26.100px;background:radial-gradient(ellipse 20% 80% at 74% 55%,rgba(80,85,62,.9),rgba(80,85,62,0) 100%),linear-gradient(90deg,#8e7e67 0%,#86755e 12%,#80705b 40%,#776a57 57%,#62604c 66%,#595b46 76%,#5d5e49 90%,#666750 100%)"></div>
  <div class="abs" style="left:191px;top:102.4px;width:188.800px;height:26.100px;background:linear-gradient(180deg,rgba(255,255,255,.1),rgba(255,255,255,0) 40%,rgba(0,0,0,.08))"></div>
  <div class="t" style="left:200.8px;top:137.32px;font-size:6.400px;color:#404246">を達成するためにどのような取り組みをしてきたか</div>
  <div class="t" style="left:200.8px;top:154.62px;font-size:6.400px;color:#404246"><span class="sy">○</span>いいことみつけはどのような形で取り組んできたか</div>
  <div class="t" style="left:200.8px;top:163.82px;font-size:6.400px;color:#404246"><span class="sy">○</span>研究テーマの実現に向けて全校で共有できるものはあるか</div>
  <div class="t" style="left:207px;top:172.52px;font-size:6.400px;color:#404246"><span class="sy">→</span>研究推進部の先生を中心に、記録・報告をお願いします。（canva）</div>
  <div class="t" style="left:199.5px;top:190.32px;font-size:6.400px;color:#404246;letter-spacing:.2px">［グループごとに、１０：５０までには終了　職員室へ集合］</div>
  <div class="t" style="left:427px;top:87.85px;font-size:3.450px;color:#777">グループごとに職員室の左左（）学級の段階での成果と課題等）</div>
  <div class="abs" style="left:423px;top:92.8px;width:153.600px;height:47.300px;background:radial-gradient(ellipse 34% 50% at 32% 68%,rgba(98,86,72,.75),rgba(98,86,72,0) 100%),linear-gradient(180deg,rgba(255,236,200,.16) 0%,rgba(255,236,200,.07) 30%,rgba(0,0,0,.05) 55%,rgba(0,0,0,.1) 100%),linear-gradient(90deg,#897a63 0%,#82735d 28%,#786b58 52%,#666150 70%,#5a5b47 84%,#5f604b 100%)"></div>
  <div class="t" style="left:455px;top:141.65px;font-size:3.400px;color:#777">※下線のある研究部の先生中心に 進めて下さい</div>
  <div class="t" style="left:445px;top:154.3px;font-size:7.950px;color:#26282c">職員室後方<span class="sy" style="display:inline-block;transform:scaleX(1.280);margin:0 1px">→</span>スライド<span style="margin-left:1.800px">②</span></div>
  <div class="t" style="left:445px;top:165.7px;font-size:7.950px;color:#26282c">多目的室<span class="sy" style="display:inline-block;transform:scaleX(1.280);margin:0 1px">→</span>スライド<span style="margin-left:1.800px">③</span></div>
  <div class="t" style="left:445px;top:177.1px;font-size:7.950px;color:#26282c">図工室<span class="sy" style="display:inline-block;transform:scaleX(1.280);margin:0 1px">→</span>スライド<span style="margin-left:1.800px">④</span></div>
  <div class="t" style="left:445px;top:188.5px;font-size:7.950px;color:#26282c">放送室<span class="sy" style="display:inline-block;transform:scaleX(1.280);margin:0 1px">→</span>スライド<span style="margin-left:1.800px">⑤</span></div>
  <div class="t" style="left:511.8px;width:300px;text-align:center;top:80.45px;font-size:7.1px;color:#111;font-weight:700">学級経営・専科案</div>
  <div class="t" style="left:511.8px;width:300px;text-align:center;top:90.8px;font-size:7px;color:#111;font-weight:700">（アイコンをクリックすると資料にとびます）</div>
  <div class="t" style="left:466.6px;width:300px;text-align:center;top:113.85px;font-size:10.5px;color:#111;font-weight:700;text-decoration:underline;text-decoration-thickness:.9px;text-underline-offset:1.200px">職員室</div>
  <div class="t" style="left:555.5px;width:300px;text-align:center;top:113.85px;font-size:10.5px;color:#111;font-weight:700;text-decoration:underline;text-decoration-thickness:.9px;text-underline-offset:1.200px">多目的室</div>
  <div class="t" style="left:466.6px;width:300px;text-align:center;top:163.25px;font-size:10.5px;color:#111;font-weight:700;text-decoration:underline;text-decoration-thickness:.9px;text-underline-offset:1.200px">図工室</div>
  <div class="t" style="left:555px;width:300px;text-align:center;top:163.25px;font-size:10.5px;color:#111;font-weight:700;text-decoration:underline;text-decoration-thickness:.9px;text-underline-offset:1.200px">放送室</div>
  <svg class="abs" style="left:603.2px;top:128.3px" width="26" height="26" viewBox="0 0 26 26" fill="#f6bb5e">
<circle cx="6.400" cy="2.900" r="2.500"/>
<path d="M3.800 6.600c.9-1.100 3.300-1.300 4.400-.3l2.600 3.700 3.300.9c1 .3.700 1.700-.3 1.600l-4-.7-1.600-1.800-.6 3.900 3.600.4c.9.100 1.300.7 1.200 1.500l-.7 7.600c-.1 1.200-1.900 1.200-2-.1l.2-5.900-5.200-.2c-1.500-.1-2.300-1.100-2.100-2.500z"/>
<path d="M.6 9.700c-.1-.9 1.200-1 1.400-.1l.9 7.400h5.700v1.400H6.100v3.300l2.900 1.800c.5.300.3.900-.3.900H6.900l-1.400-1-1.400 1H2.200c-.6 0-.8-.6-.3-.9l2.800-1.800v-3.300H2.700c-.7 0-1.100-.4-1.200-1z"/>
<path d="M12.300 13h13.300v1.600H12.300z"/><path d="M13.400 15h11.500v10.600H13.400z"/>
<path d="M18.300 17.400h5.600M18.300 19.600h5.600M18.300 21.800h5.600M18.300 24h5.600" stroke="#fff" stroke-width=".7" stroke-opacity=".75"/>
<path d="M14 9.300l2-1.600 2 1.900 1.300-.4.900 3.400h-7z"/><path d="M21 10.200l2.600-1.300 1.500 1.200.3 2.500h-4.400z"/>
</svg>
  <svg class="abs" style="left:691.6px;top:128.1px" width="26" height="26.500" viewBox="0 0 26 26.500" fill="none" stroke="#7ed957">
<path d="M7.600 2.400l5.500 6.200L21.200.8" stroke-width="1.100" stroke-linecap="round"/>
<rect x="1.700" y="9" width="23" height="15.400" rx="2" stroke-width="2.300"/>
<path d="M19.300 8.500h4a2 2 0 012 2v12.400a2 2 0 01-2 2h-4z" fill="#7ed957" stroke="none"/>
<path d="M5 25.200v1M21 25.200v1" stroke-width="1.800"/>
<circle cx="22.400" cy="13" r=".75" fill="#e6f8dc" stroke="none"/><circle cx="22.400" cy="16" r=".75" fill="#e6f8dc" stroke="none"/><circle cx="22.400" cy="19" r=".75" fill="#e6f8dc" stroke="none"/>
</svg>
  <svg class="abs" style="left:603px;top:181.1px" width="26" height="26" viewBox="0 0 26 26" fill="none" stroke="#38b6ff" stroke-width="1.250" stroke-linecap="round" stroke-linejoin="round">
<path d="M13.500 2.600C7.200 1.900 2.400 6.400 2.500 12.800c.1 6.400 4.800 11 10.600 10.800 3.300-.1 4.200-2.200 3-4.100-1.300-2 .3-3.900 2.400-3.800 3.500.2 5.300-1.600 4.900-4.700-.5-4.600-4.700-7.800-9.900-8.400z"/>
<circle cx="8.200" cy="7" r="1.600"/><circle cx="6" cy="12.300" r="1.700"/><circle cx="7.500" cy="17.600" r="1.700"/><circle cx="11.800" cy="20.300" r="1.500"/>
<path d="M1 1c2.400.2 4.400 1.600 5.500 4L22.800 21.600c1 1.100 1.600 2.100 2.200 3.400-1.400-.5-2.500-1.200-3.500-2.200L5 6.600C2.700 5.400 1.300 3.400 1 1z" fill="#fff"/>
<path d="M1 1c2.400.2 4.400 1.600 5.500 4L5 6.600C2.700 5.400 1.300 3.400 1 1z" fill="#38b6ff"/>
<path d="M7.600 7.600l13.500 14" stroke-width=".8"/>
</svg>
  <svg class="abs" style="left:696.3px;top:178.7px" width="17" height="27" viewBox="0 0 17 27" fill="none" stroke="#ff66c4" stroke-linecap="round">
<rect x="2.700" y=".7" width="11.600" height="17" rx="5.800" fill="#ff66c4" stroke="none"/>
<path d="M2.700 5.800h11.600M2.700 8h11.600M2.700 10.200h11.600M2.700 12.400h11.600" stroke="#ffd3ee" stroke-width=".8" stroke-linecap="butt"/>
<path d="M8.500 4.500v9" stroke="#ff66c4" stroke-width="1.600"/>
<path d="M1 11.600v1.800a7.500 7.500 0 0015 0v-1.800" stroke-width="1.500"/>
<path d="M8.500 21v3.800" stroke-width="2.200" stroke-linecap="butt"/>
<path d="M3.200 25.600h10.600" stroke-width="1.800"/>
</svg>
  <div class="t" style="left:137.5px;width:300px;text-align:center;top:266.2px;font-size:11.6px;color:#111;font-weight:700">研究全体会まとめ</div>
  <div class="abs" style="left:195.6px;top:296.1px;width:192px;height:104.700px;background:#fff;overflow:hidden;font-family:'Liberation Sans','Noto Sans CJK JP',sans-serif">
    <div class="abs" style="left:0;top:2.400px;width:159.300px;height:55.400px;background:#ffd200"></div>
    <div class="abs" style="left:159.300px;top:2.400px;width:28.400px;height:55.400px;background:#8f8f8f"></div>
    <div class="abs" style="left:161.400px;top:5.100px;width:24px;height:24px;border-radius:50%;background:#000"></div>
    <div class="abs" style="left:161.400px;top:31.300px;width:24px;height:24px;border-radius:50%;background:#ffd200"></div>
    <div class="t" style="left:17.600px;top:10.200px;font-size:19px;font-weight:700;color:#111">第4回研究全体</div>
    <div class="t" style="left:17.600px;top:29.200px;font-size:19px;font-weight:700;color:#111">会 概要</div>
    <div class="t" style="left:13.700px;top:63.100px;font-size:5.800px;color:#2b2b2b">研究テーマの達成に向けた取り組み</div>
    <div class="t" style="left:13.700px;top:75.200px;font-size:4.500px;color:#2b2b2b">職員室協力グループ</div>
    <div class="t" style="left:18px;top:85.600px;font-size:3.700px;color:#444"><span style="font-size:2.400px;vertical-align:.5px">■</span>&nbsp; <b style="color:#111">対話の重視</b>：教師間の対話を重視し、授業後に児童の様子や授業内容を共有する。</div>
    <div class="t" style="left:18px;top:90.600px;font-size:3.700px;color:#444"><span style="font-size:2.400px;vertical-align:.5px">■</span>&nbsp; <b style="color:#111">心の余裕</b>：教師が心の余裕を持てるような環境作りを推進。</div>
    <div class="t" style="left:18px;top:95.600px;font-size:3.700px;color:#444"><span style="font-size:2.400px;vertical-align:.5px">■</span>&nbsp; <b style="color:#111">学級通信の活用</b>：学級通信を通じて保護者や児童に情報を伝える。</div>
    <div class="t" style="left:18px;top:100.600px;font-size:3.700px;color:#444"><span style="font-size:2.400px;vertical-align:.5px">■</span>&nbsp; <b style="color:#111">環境整備</b>：ロッカー表紙データ化を実施し、片付けの習慣を身につけさせる。</div>
    <div class="abs" style="left:0;top:78px;width:192px;height:27px;background:linear-gradient(180deg,rgba(236,238,242,0),rgba(236,238,242,.55) 55%,rgba(232,234,239,.95))"></div>
    <div class="abs" style="left:187.700px;top:0;width:4.300px;height:104.700px;background:#f3f3f4"></div>
    <div class="abs" style="left:188.300px;top:1.200px;width:0;height:0;border-left:1.600px solid transparent;border-right:1.600px solid transparent;border-bottom:2.200px solid #777"></div>
    <div class="abs" style="left:188.300px;top:4.800px;width:3.200px;height:29.500px;border-radius:1.600px;background:#7a7a7b"></div>
    <div class="abs" style="left:188.300px;top:99.600px;width:0;height:0;border-left:1.600px solid transparent;border-right:1.600px solid transparent;border-top:2.200px solid #777"></div>
    <svg class="abs" style="left:179px;top:94px" width="5.600" height="5.600" viewBox="0 0 6 6"><path d="M3.600.5h1.900v1.900M5.500.5L3.500 2.500M2.400 5.500H.5V3.600M.5 5.500l2-2" stroke="#3a3a3a" stroke-width=".7" fill="none"/></svg>
  </div>
  <div class="abs" style="left:895.7px;top:378.3px;width:25.600px;height:25.600px;border-radius:50%;background:linear-gradient(135deg,#3fd0dc,#6a7ff0 50%,#9a55f0);box-shadow:0 1px 4px rgba(40,50,90,.22)"></div>
  <div class="abs" style="left:896.8px;top:379.4px;width:23.400px;height:23.400px;border-radius:50%;background:#fff"></div>
  <svg class="abs" style="left:901.5px;top:384.1px" width="14" height="14" viewBox="0 0 14 14"><defs><linearGradient id="gM" x1="0" y1="0" x2="1" y2="1"><stop offset="0" stop-color="#2e7fe8"/><stop offset="1" stop-color="#7a3ff0"/></linearGradient></defs><path d="M7.600 2.600l1.300 3.200 3.200 1.300-3.200 1.300-1.300 3.200-1.300-3.200-3.200-1.300 3.200-1.300z" fill="url(#gM)"/><path d="M2.800 1l.55 1.350 1.350.55-1.350.55L2.800 4.800l-.55-1.350L.9 2.900l1.350-.55zM3 9.400l.45 1.100 1.100.45-1.100.45L3 12.500l-.45-1.100-1.100-.45 1.100-.45z" fill="url(#gM)"/></svg>
  </div>
  <div id="strip" class="abs">
  <div class="abs" style="left:9.3px;top:6.9px;width:69.100px;height:43.700px;border-radius:6px;background:#fff;overflow:hidden"><svg class="abs" style="left:0;top:0" width="69.100" height="43.700" viewBox="0 0 69.100 43.700"><rect x=".5" y=".5" width="68.100" height="42.700" rx="5.500" fill="none" stroke="#7c7e82" stroke-width="1" stroke-dasharray="1.900 1.500"/></svg><div class="abs" style="left:1px;top:-.2px"><i class="sq" style="left:30px;top:3.92px;width:12.7px;height:0.588px;background:#9a9a9a"></i><i class="sq" style="left:28.6px;top:5.09px;width:15.5px;height:0.588px;background:#9a9a9a"></i><i class="sq" style="left:7.83px;top:11.8px;width:18.2px;height:2.55px;background:#7a6a56"></i><i class="sq" style="left:8.62px;top:15.9px;width:14.5px;height:0.392px;background:#c3c3c3"></i><i class="sq" style="left:8.62px;top:17px;width:14.5px;height:0.392px;background:#c3c3c3"></i><i class="sq" style="left:8.62px;top:18.2px;width:14.5px;height:0.392px;background:#c3c3c3"></i><i class="sq" style="left:8.62px;top:19.8px;width:10.6px;height:0.392px;background:#c3c3c3"></i><i class="sq" style="left:30px;top:10.8px;width:14.7px;height:4.31px;background:#75675a"></i><i class="sq" style="left:32.5px;top:16.3px;width:7.83px;height:0.392px;background:#b9b9b9"></i><i class="sq" style="left:32.5px;top:17.4px;width:7.83px;height:0.392px;background:#b9b9b9"></i><i class="sq" style="left:32.5px;top:18.6px;width:7.83px;height:0.392px;background:#b9b9b9"></i><i class="sq" style="left:32.5px;top:19.8px;width:7.83px;height:0.392px;background:#b9b9b9"></i><i class="sq" style="left:48.2px;top:9.6px;width:10.6px;height:0.588px;background:#555"></i><i class="sq" style="left:47px;top:10.6px;width:12.9px;height:0.588px;background:#555"></i><i class="sq" style="left:47.4px;top:13.3px;width:4.31px;height:0.783px;background:#222"></i><i class="sq" style="left:55px;top:13.3px;width:4.9px;height:0.783px;background:#222"></i><i class="sq" style="left:48px;top:15.5px;width:2.35px;height:2.35px;background:#f4b860;border-radius:50%"></i><i class="sq" style="left:56.2px;top:15.5px;width:2.35px;height:2.35px;background:#7ed957;border-radius:1px"></i><i class="sq" style="left:47.4px;top:18.6px;width:4.31px;height:0.783px;background:#222"></i><i class="sq" style="left:55.4px;top:18.6px;width:4.11px;height:0.783px;background:#222"></i><i class="sq" style="left:48.2px;top:20.2px;width:1.96px;height:2.35px;background:#38b6ff;border-radius:50%"></i><i class="sq" style="left:56.8px;top:20px;width:1.37px;height:2.55px;background:#ff66c4;border-radius:2px"></i><i class="sq" style="left:12.9px;top:27.4px;width:8.23px;height:0.979px;background:#333"></i><i class="sq" style="left:8.42px;top:30.4px;width:16.6px;height:1.76px;background:#ffd200"></i><i class="sq" style="left:25.1px;top:30.4px;width:1.57px;height:1.76px;background:#8f8f8f"></i><i class="sq" style="left:8.42px;top:32.1px;width:18.2px;height:5.68px;background:linear-gradient(180deg,#fff,#e9ebef)"></i><i class="sq" style="left:10.4px;top:32.9px;width:12.7px;height:0.294px;background:#cfcfcf"></i><i class="sq" style="left:10.4px;top:33.9px;width:12.7px;height:0.294px;background:#cfcfcf"></i><i class="sq" style="left:10.4px;top:34.9px;width:12.7px;height:0.294px;background:#cfcfcf"></i><i class="sq" style="left:10.4px;top:35.8px;width:12.7px;height:0.294px;background:#cfcfcf"></i></div><b style="position:absolute;left:5px;bottom:4.600px;font-size:8px;font-weight:700;color:#2c2f34;line-height:1">1</b></div>
  <div class="th" style="left:87.3px;top:9.4px"><i class="sq" style="left:24.5px;top:1.96px;width:21px;height:4.7px;background:#f9c26b"></i><i class="sq" style="left:28.3px;top:3.37px;width:13.4px;height:1.37px;background:rgba(20,30,40,.4)"></i><i class="sq" style="left:15.1px;top:8.03px;width:21.5px;height:0.783px;background:#35b37e"></i><i class="sq" style="left:45px;top:8.23px;width:9.79px;height:0.783px;background:#ff5fb0"></i><i class="sq" style="left:11.4px;top:12.1px;width:2.74px;height:4.9px;background:#2f9fe6"></i><i class="sq" style="left:11.9px;top:13.6px;width:1.75px;height:1.37px;background:rgba(20,30,40,.4)"></i><i class="sq" style="left:15.1px;top:12.1px;width:2.94px;height:4.9px;background:#2f9fe6"></i><i class="sq" style="left:15.6px;top:13.6px;width:1.88px;height:1.37px;background:rgba(20,30,40,.4)"></i><i class="sq" style="left:19.6px;top:12.1px;width:2.94px;height:4.9px;background:#6cc0f2"></i><i class="sq" style="left:20.1px;top:13.6px;width:1.88px;height:1.37px;background:rgba(20,30,40,.4)"></i><i class="sq" style="left:24.5px;top:12.1px;width:3.92px;height:5.48px;background:#2f9fe6"></i><i class="sq" style="left:25.2px;top:13.8px;width:2.51px;height:1.37px;background:rgba(20,30,40,.4)"></i><i class="sq" style="left:30.4px;top:12.1px;width:2.94px;height:4.9px;background:#2f9fe6"></i><i class="sq" style="left:30.9px;top:13.6px;width:1.88px;height:1.37px;background:rgba(20,30,40,.4)"></i><i class="sq" style="left:35.3px;top:12.1px;width:4.9px;height:9.79px;background:#2f9fe6"></i><i class="sq" style="left:36.1px;top:15.1px;width:3.13px;height:1.37px;background:rgba(20,30,40,.4)"></i><i class="sq" style="left:11.4px;top:20px;width:6.66px;height:4.9px;background:#2f9fe6"></i><i class="sq" style="left:12.6px;top:21.4px;width:4.26px;height:1.37px;background:rgba(20,30,40,.4)"></i><i class="sq" style="left:19.6px;top:20px;width:3.92px;height:5.48px;background:#2f9fe6"></i><i class="sq" style="left:20.3px;top:21.6px;width:2.51px;height:1.37px;background:rgba(20,30,40,.4)"></i><i class="sq" style="left:24.5px;top:20.6px;width:6.85px;height:4.9px;background:#2f9fe6"></i><i class="sq" style="left:25.7px;top:22px;width:4.39px;height:1.37px;background:rgba(20,30,40,.4)"></i><i class="sq" style="left:11.4px;top:27.4px;width:3.72px;height:8.62px;background:#6cc0f2"></i><i class="sq" style="left:12px;top:30px;width:2.38px;height:1.37px;background:rgba(20,30,40,.4)"></i><i class="sq" style="left:17.6px;top:27px;width:3.92px;height:4.31px;background:#2f9fe6"></i><i class="sq" style="left:18.3px;top:28.3px;width:2.51px;height:1.37px;background:rgba(20,30,40,.4)"></i><i class="sq" style="left:23.5px;top:27.8px;width:6.85px;height:6.85px;background:#2f9fe6"></i><i class="sq" style="left:24.7px;top:29.9px;width:4.39px;height:1.37px;background:rgba(20,30,40,.4)"></i><i class="sq" style="left:42.5px;top:11.6px;width:5.48px;height:3.53px;background:#fbe6a6"></i><i class="sq" style="left:43.5px;top:12.6px;width:3.51px;height:1.13px;background:rgba(20,30,40,.4)"></i><i class="sq" style="left:49.4px;top:11.6px;width:4.9px;height:3.53px;background:#fbe6a6"></i><i class="sq" style="left:50.2px;top:12.6px;width:3.13px;height:1.13px;background:rgba(20,30,40,.4)"></i><i class="sq" style="left:55.8px;top:11.6px;width:3.92px;height:2.94px;background:#fbe6a6"></i><i class="sq" style="left:56.5px;top:12.4px;width:2.51px;height:0.94px;background:rgba(20,30,40,.4)"></i><i class="sq" style="left:42.5px;top:16.5px;width:5.48px;height:3.53px;background:#fbe6a6"></i><i class="sq" style="left:43.5px;top:17.5px;width:3.51px;height:1.13px;background:rgba(20,30,40,.4)"></i><i class="sq" style="left:49.4px;top:16.5px;width:4.9px;height:2.94px;background:#fbe6a6"></i><i class="sq" style="left:50.2px;top:17.3px;width:3.13px;height:0.94px;background:rgba(20,30,40,.4)"></i><i class="sq" style="left:55.8px;top:16.5px;width:3.92px;height:2.94px;background:#fbe6a6"></i><i class="sq" style="left:56.5px;top:17.3px;width:2.51px;height:0.94px;background:rgba(20,30,40,.4)"></i><i class="sq" style="left:42.5px;top:21.5px;width:5.48px;height:5.88px;background:#fbe6a6"></i><i class="sq" style="left:43.5px;top:23.3px;width:3.51px;height:1.37px;background:rgba(20,30,40,.4)"></i><i class="sq" style="left:49.4px;top:21.5px;width:4.9px;height:3.33px;background:#fbe6a6"></i><i class="sq" style="left:50.2px;top:22.5px;width:3.13px;height:1.07px;background:rgba(20,30,40,.4)"></i><b>2</b></div>
  <div class="th" style="left:165.6px;top:9.4px"><i class="sq" style="left:2.35px;top:9.2px;width:4.9px;height:2.55px;background:#fbe6a6"></i><i class="sq" style="left:3.23px;top:9.97px;width:3.13px;height:0.815px;background:rgba(20,30,40,.4)"></i><i class="sq" style="left:9.2px;top:9.2px;width:4.9px;height:2.55px;background:#fbe6a6"></i><i class="sq" style="left:10.1px;top:9.97px;width:3.13px;height:0.815px;background:rgba(20,30,40,.4)"></i><i class="sq" style="left:15.5px;top:9.2px;width:4.9px;height:2.55px;background:#fbe6a6"></i><i class="sq" style="left:16.4px;top:9.97px;width:3.13px;height:0.815px;background:rgba(20,30,40,.4)"></i><i class="sq" style="left:21.9px;top:9.2px;width:4.9px;height:2.55px;background:#fbe6a6"></i><i class="sq" style="left:22.8px;top:9.97px;width:3.13px;height:0.815px;background:rgba(20,30,40,.4)"></i><i class="sq" style="left:28.2px;top:9.2px;width:2.94px;height:2.55px;background:#fbe6a6"></i><i class="sq" style="left:28.7px;top:9.97px;width:1.88px;height:0.815px;background:rgba(20,30,40,.4)"></i><i class="sq" style="left:32.7px;top:9.2px;width:3.92px;height:2.55px;background:#fbe6a6"></i><i class="sq" style="left:33.4px;top:9.97px;width:2.51px;height:0.815px;background:rgba(20,30,40,.4)"></i><i class="sq" style="left:38px;top:9.2px;width:3.53px;height:2.55px;background:#fbe6a6"></i><i class="sq" style="left:38.6px;top:9.97px;width:2.26px;height:0.815px;background:rgba(20,30,40,.4)"></i><i class="sq" style="left:42.9px;top:9.2px;width:3.92px;height:2.55px;background:#fbe6a6"></i><i class="sq" style="left:43.6px;top:9.97px;width:2.51px;height:0.815px;background:rgba(20,30,40,.4)"></i><i class="sq" style="left:18px;top:13.5px;width:10.2px;height:2.94px;background:#7ed957"></i><i class="sq" style="left:19.9px;top:14.4px;width:6.52px;height:0.94px;background:rgba(20,30,40,.4)"></i><i class="sq" style="left:2.35px;top:17.4px;width:4.9px;height:2.74px;background:#fbe6a6"></i><i class="sq" style="left:3.23px;top:18.3px;width:3.13px;height:0.877px;background:rgba(20,30,40,.4)"></i><i class="sq" style="left:8.62px;top:17.4px;width:5.48px;height:2.74px;background:#fbe6a6"></i><i class="sq" style="left:9.6px;top:18.3px;width:3.51px;height:0.877px;background:rgba(20,30,40,.4)"></i><i class="sq" style="left:19px;top:17.4px;width:4.9px;height:2.74px;background:#fbe6a6"></i><i class="sq" style="left:19.9px;top:18.3px;width:3.13px;height:0.877px;background:rgba(20,30,40,.4)"></i><i class="sq" style="left:25.9px;top:17.4px;width:7.83px;height:2.74px;background:#fbe6a6"></i><i class="sq" style="left:27.3px;top:18.3px;width:5.01px;height:0.877px;background:rgba(20,30,40,.4)"></i><i class="sq" style="left:35.1px;top:17.4px;width:4.5px;height:2.74px;background:#fbe6a6"></i><i class="sq" style="left:35.9px;top:18.3px;width:2.88px;height:0.877px;background:rgba(20,30,40,.4)"></i><i class="sq" style="left:41.5px;top:17.4px;width:2.94px;height:2.74px;background:#fbe6a6"></i><i class="sq" style="left:42px;top:18.3px;width:1.88px;height:0.877px;background:rgba(20,30,40,.4)"></i><i class="sq" style="left:9.2px;top:21px;width:4.9px;height:4.11px;background:#fbe6a6"></i><i class="sq" style="left:10.1px;top:22.2px;width:3.13px;height:1.32px;background:rgba(20,30,40,.4)"></i><i class="sq" style="left:19px;top:21px;width:4.9px;height:6.85px;background:#fbe6a6"></i><i class="sq" style="left:19.9px;top:23px;width:3.13px;height:1.37px;background:rgba(20,30,40,.4)"></i><i class="sq" style="left:35.1px;top:20.6px;width:4.5px;height:8.42px;background:#fbe6a6"></i><i class="sq" style="left:35.9px;top:23.1px;width:2.88px;height:1.37px;background:rgba(20,30,40,.4)"></i><i class="sq" style="left:2.35px;top:21px;width:3.92px;height:2.55px;background:#fbe6a6"></i><i class="sq" style="left:3.06px;top:21.7px;width:2.51px;height:0.815px;background:rgba(20,30,40,.4)"></i><i class="sq" style="left:52.7px;top:7.44px;width:4.5px;height:0.783px;background:#ff5fb0"></i><i class="sq" style="left:52.7px;top:9.79px;width:14.3px;height:1.57px;background:#3c3c3c"></i><i class="sq" style="left:52.7px;top:11.8px;width:14.7px;height:1.18px;background:#3c3c3c"></i><i class="sq" style="left:52.7px;top:13.3px;width:13.9px;height:0.979px;background:#3c3c3c"></i><i class="sq" style="left:52.7px;top:15.7px;width:11.4px;height:0.979px;background:#3c3c3c"></i><i class="sq" style="left:52.7px;top:17.2px;width:10.4px;height:0.783px;background:#3c3c3c"></i><i class="sq" style="left:52.7px;top:18.4px;width:7.44px;height:0.588px;background:#3c3c3c"></i><i class="sq" style="left:52.7px;top:20.4px;width:10.4px;height:0.979px;background:#3c3c3c"></i><i class="sq" style="left:52.7px;top:21.9px;width:8.81px;height:0.783px;background:#3c3c3c"></i><i class="sq" style="left:52.7px;top:24.9px;width:3.53px;height:0.979px;background:#3c3c3c"></i><i class="sq" style="left:52.7px;top:26.8px;width:9.4px;height:1.37px;background:#3c3c3c"></i><i class="sq" style="left:52.7px;top:28.8px;width:8.03px;height:0.979px;background:#3c3c3c"></i><i class="sq" style="left:52.7px;top:30.4px;width:4.9px;height:0.783px;background:#3c3c3c"></i><b>3</b></div>
  <div class="th" style="left:243.9px;top:9.4px"><i class="sq" style="left:20.6px;top:3.72px;width:27.8px;height:6.85px;background:#38b6ff"></i><i class="sq" style="left:25.6px;top:5.78px;width:17.8px;height:1.37px;background:rgba(20,30,40,.4)"></i><i class="sq" style="left:4.9px;top:5.88px;width:5.88px;height:6.27px;background:#7ed957"></i><i class="sq" style="left:5.95px;top:7.76px;width:3.76px;height:1.37px;background:rgba(20,30,40,.4)"></i><i class="sq" style="left:4.9px;top:21.9px;width:5.88px;height:5.88px;background:#7ed957"></i><i class="sq" style="left:5.95px;top:23.7px;width:3.76px;height:1.37px;background:rgba(20,30,40,.4)"></i><i class="sq" style="left:21px;top:22.9px;width:5.88px;height:6.85px;background:#7ed957"></i><i class="sq" style="left:22px;top:25px;width:3.76px;height:1.37px;background:rgba(20,30,40,.4)"></i><i class="sq" style="left:47.4px;top:28.8px;width:5.88px;height:5.88px;background:#7ed957"></i><i class="sq" style="left:48.5px;top:30.6px;width:3.76px;height:1.37px;background:rgba(20,30,40,.4)"></i><i class="sq" style="left:57.8px;top:27.8px;width:5.88px;height:6.27px;background:#7ed957"></i><i class="sq" style="left:58.8px;top:29.7px;width:3.76px;height:1.37px;background:rgba(20,30,40,.4)"></i><i class="sq" style="left:12.7px;top:5.88px;width:5.88px;height:6.27px;background:#ff66c4"></i><i class="sq" style="left:13.8px;top:7.76px;width:3.76px;height:1.37px;background:rgba(20,30,40,.4)"></i><i class="sq" style="left:4.9px;top:14.1px;width:5.88px;height:5.48px;background:#ff66c4"></i><i class="sq" style="left:5.95px;top:15.7px;width:3.76px;height:1.37px;background:rgba(20,30,40,.4)"></i><i class="sq" style="left:12.7px;top:14.1px;width:5.88px;height:5.48px;background:#ff66c4"></i><i class="sq" style="left:13.8px;top:15.7px;width:3.76px;height:1.37px;background:rgba(20,30,40,.4)"></i><i class="sq" style="left:30.4px;top:14.1px;width:5.48px;height:8.81px;background:#ff66c4"></i><i class="sq" style="left:31.3px;top:16.7px;width:3.51px;height:1.37px;background:rgba(20,30,40,.4)"></i><i class="sq" style="left:57.8px;top:15.7px;width:5.88px;height:8.23px;background:#ff66c4"></i><i class="sq" style="left:58.8px;top:18.1px;width:3.76px;height:1.37px;background:rgba(20,30,40,.4)"></i><i class="sq" style="left:38.6px;top:14.1px;width:8.42px;height:6.85px;background:#f9c26b"></i><i class="sq" style="left:40.1px;top:16.2px;width:5.39px;height:1.37px;background:rgba(20,30,40,.4)"></i><i class="sq" style="left:49px;top:14.1px;width:6.46px;height:4.9px;background:#f9c26b"></i><i class="sq" style="left:50.1px;top:15.6px;width:4.14px;height:1.37px;background:rgba(20,30,40,.4)"></i><i class="sq" style="left:46.6px;top:21px;width:9.2px;height:4.9px;background:#f9c26b"></i><i class="sq" style="left:48.3px;top:22.4px;width:5.89px;height:1.37px;background:rgba(20,30,40,.4)"></i><i class="sq" style="left:54.8px;top:3.33px;width:5.88px;height:6.85px;background:#a9d8f5"></i><i class="sq" style="left:55.9px;top:5.39px;width:3.76px;height:1.37px;background:rgba(20,30,40,.4)"></i><i class="sq" style="left:21.9px;top:15.1px;width:5.48px;height:4.9px;background:#8fd0f5"></i><i class="sq" style="left:22.9px;top:16.5px;width:3.51px;height:1.37px;background:rgba(20,30,40,.4)"></i><i class="sq" style="left:37.6px;top:26.2px;width:5.48px;height:4.5px;background:#8fd0f5"></i><i class="sq" style="left:38.6px;top:27.6px;width:3.51px;height:1.37px;background:rgba(20,30,40,.4)"></i><i class="sq" style="left:12.7px;top:21.9px;width:5.88px;height:8.81px;background:#fbe6a6"></i><i class="sq" style="left:13.8px;top:24.6px;width:3.76px;height:1.37px;background:rgba(20,30,40,.4)"></i><b>4</b></div>
  <div class="th" style="left:322.2px;top:9.4px"><i class="sq" style="left:4.9px;top:7.44px;width:9.79px;height:0.783px;background:#f4a83a"></i><i class="sq" style="left:2.55px;top:10.6px;width:2.74px;height:2.55px;background:#fbe6a6"></i><i class="sq" style="left:3.04px;top:11.3px;width:1.75px;height:0.815px;background:rgba(20,30,40,.4)"></i><i class="sq" style="left:6.85px;top:10.6px;width:2.94px;height:2.55px;background:#fbe6a6"></i><i class="sq" style="left:7.38px;top:11.3px;width:1.88px;height:0.815px;background:rgba(20,30,40,.4)"></i><i class="sq" style="left:11.2px;top:10.6px;width:2.94px;height:2.55px;background:#fbe6a6"></i><i class="sq" style="left:11.7px;top:11.3px;width:1.88px;height:0.815px;background:rgba(20,30,40,.4)"></i><i class="sq" style="left:15.7px;top:10.6px;width:2.94px;height:2.55px;background:#fbe6a6"></i><i class="sq" style="left:16.2px;top:11.3px;width:1.88px;height:0.815px;background:rgba(20,30,40,.4)"></i><i class="sq" style="left:20.2px;top:10.6px;width:3.33px;height:2.55px;background:#fbe6a6"></i><i class="sq" style="left:20.8px;top:11.3px;width:2.13px;height:0.815px;background:rgba(20,30,40,.4)"></i><i class="sq" style="left:24.9px;top:10.6px;width:3.53px;height:2.55px;background:#fbe6a6"></i><i class="sq" style="left:25.5px;top:11.3px;width:2.26px;height:0.815px;background:rgba(20,30,40,.4)"></i><i class="sq" style="left:2.55px;top:14.5px;width:2.74px;height:2.55px;background:#fbe6a6"></i><i class="sq" style="left:3.04px;top:15.3px;width:1.75px;height:0.815px;background:rgba(20,30,40,.4)"></i><i class="sq" style="left:6.85px;top:14.5px;width:7.25px;height:2.55px;background:#fbe6a6"></i><i class="sq" style="left:8.16px;top:15.3px;width:4.64px;height:0.815px;background:rgba(20,30,40,.4)"></i><i class="sq" style="left:20.2px;top:14.5px;width:3.33px;height:2.55px;background:#fbe6a6"></i><i class="sq" style="left:20.8px;top:15.3px;width:2.13px;height:0.815px;background:rgba(20,30,40,.4)"></i><i class="sq" style="left:2.55px;top:20.6px;width:3.33px;height:2.35px;background:#fbe6a6"></i><i class="sq" style="left:3.15px;top:21.3px;width:2.13px;height:0.752px;background:rgba(20,30,40,.4)"></i><i class="sq" style="left:7.25px;top:20.6px;width:3.53px;height:2.35px;background:#fbe6a6"></i><i class="sq" style="left:7.88px;top:21.3px;width:2.26px;height:0.752px;background:rgba(20,30,40,.4)"></i><i class="sq" style="left:12.3px;top:20.6px;width:3.33px;height:2.35px;background:#fbe6a6"></i><i class="sq" style="left:12.9px;top:21.3px;width:2.13px;height:0.752px;background:rgba(20,30,40,.4)"></i><i class="sq" style="left:16.6px;top:20.6px;width:3.53px;height:2.35px;background:#fbe6a6"></i><i class="sq" style="left:17.3px;top:21.3px;width:2.26px;height:0.752px;background:rgba(20,30,40,.4)"></i><i class="sq" style="left:2.55px;top:23.9px;width:3.33px;height:2.35px;background:#fbe6a6"></i><i class="sq" style="left:3.15px;top:24.6px;width:2.13px;height:0.752px;background:rgba(20,30,40,.4)"></i><i class="sq" style="left:12.3px;top:23.9px;width:3.33px;height:2.74px;background:#fbe6a6"></i><i class="sq" style="left:12.9px;top:24.7px;width:2.13px;height:0.877px;background:rgba(20,30,40,.4)"></i><i class="sq" style="left:39.6px;top:10.6px;width:4.9px;height:3.13px;background:#ff66c4"></i><i class="sq" style="left:40.4px;top:11.5px;width:3.13px;height:1px;background:rgba(20,30,40,.4)"></i><i class="sq" style="left:46px;top:10.6px;width:2.94px;height:3.13px;background:#ff66c4"></i><i class="sq" style="left:46.6px;top:11.5px;width:1.88px;height:1px;background:rgba(20,30,40,.4)"></i><i class="sq" style="left:49.9px;top:10.6px;width:3.53px;height:3.13px;background:#ff66c4"></i><i class="sq" style="left:50.6px;top:11.5px;width:2.26px;height:1px;background:rgba(20,30,40,.4)"></i><i class="sq" style="left:55.8px;top:10.6px;width:2.94px;height:3.13px;background:#ff66c4"></i><i class="sq" style="left:56.3px;top:11.5px;width:1.88px;height:1px;background:rgba(20,30,40,.4)"></i><i class="sq" style="left:60.1px;top:10.6px;width:7.44px;height:3.13px;background:#ff66c4"></i><i class="sq" style="left:61.5px;top:11.5px;width:4.76px;height:1px;background:rgba(20,30,40,.4)"></i><i class="sq" style="left:48px;top:14.5px;width:1.96px;height:2.55px;background:#ff66c4"></i><i class="sq" style="left:48.3px;top:15.3px;width:1.25px;height:0.815px;background:rgba(20,30,40,.4)"></i><i class="sq" style="left:60.1px;top:14.5px;width:3.53px;height:3.13px;background:#ff66c4"></i><i class="sq" style="left:60.8px;top:15.4px;width:2.26px;height:1px;background:rgba(20,30,40,.4)"></i><i class="sq" style="left:22.5px;top:19px;width:15.7px;height:4.5px;background:#ff66c4"></i><i class="sq" style="left:25.3px;top:20.3px;width:10px;height:1.37px;background:rgba(20,30,40,.4)"></i><i class="sq" style="left:39.6px;top:20.6px;width:6.46px;height:3.33px;background:#ff66c4"></i><i class="sq" style="left:40.7px;top:21.6px;width:4.14px;height:1.07px;background:rgba(20,30,40,.4)"></i><i class="sq" style="left:48px;top:20.6px;width:7.44px;height:3.33px;background:#ff66c4"></i><i class="sq" style="left:49.3px;top:21.6px;width:4.76px;height:1.07px;background:rgba(20,30,40,.4)"></i><i class="sq" style="left:48px;top:24.9px;width:7.44px;height:2.94px;background:#ff66c4"></i><i class="sq" style="left:49.3px;top:25.8px;width:4.76px;height:0.94px;background:rgba(20,30,40,.4)"></i><i class="sq" style="left:25.5px;top:27.4px;width:3.33px;height:3.72px;background:#7ed957"></i><i class="sq" style="left:26.1px;top:28.5px;width:2.13px;height:1.19px;background:rgba(20,30,40,.4)"></i><i class="sq" style="left:30.4px;top:26px;width:3.92px;height:0.588px;background:#7ed957"></i><b>5</b></div>
  <div class="th" style="left:400.5px;top:9.4px"><b>6</b></div>
  <div class="th" style="left:478.8px;top:9.4px"><b>7</b></div>
  <div class="th" style="left:557.1px;top:9.4px"><b>8</b></div>
  <div class="th" style="left:633.6px;top:9.4px;width:68.500px"><svg class="abs" style="left:29px;top:14.500px" width="10" height="10" viewBox="0 0 10 10"><path d="M5 .5v9M.5 5h9" stroke="#1e2125" stroke-width="1" fill="none"/></svg></div>
  <svg class="abs" style="left:443px;top:-7.500px" width="50" height="9" viewBox="0 0 50 9"><path d="M0 8.500h6c4.500 0 5.500-7.500 10-7.500h18c4.500 0 5.500 7.500 10 7.500h6V9H0z" fill="#fff"/><path d="M0 8h6c4.500 0 5.500-7 10-7h18c4.500 0 5.500 7 10 7h6" fill="none" stroke="#dfe1ea" stroke-width="1"/><path d="M22.500 3.600l2.500 2.300 2.500-2.300" fill="none" stroke="#2a2d31" stroke-width="1.100"/></svg>
  <svg class="abs" style="left:9.3px;top:67.3px" width="11" height="10" viewBox="0 0 11 10"><path d="M.5 1.500h7M.5 4.500h4.500M.5 7.500h3" stroke="#1e2125" stroke-width="1.100" fill="none" stroke-linecap="round"/><path d="M5.300 9.300l.5-2.200 4-4.300 1.100 1-4 4.400z" fill="none" stroke="#1e2125" stroke-width=".9" stroke-linejoin="round"/></svg>
  <div class="t" style="left:24.3px;top:68px;font-size:8.400px;font-weight:700;color:#1e2125">メモ</div>
  <svg class="abs" style="left:54.6px;top:66.3px" width="11" height="12" viewBox="0 0 11 12"><circle cx="5.500" cy="6.800" r="4.300" fill="none" stroke="#1e2125" stroke-width="1.100"/><path d="M5.500 4.400v2.600l1.500 1M4 .8h3M9 2.800l.8.800" stroke="#1e2125" stroke-width="1.100" fill="none" stroke-linecap="round"/></svg>
  <div class="t" style="left:69.8px;top:68px;font-size:8.400px;font-weight:700;color:#1e2125">タイマー</div>
  <div class="t" style="left:635px;top:68.3px;font-size:8.500px;font-weight:700;color:#1e2125">1/8ページ</div>
  <div class="abs" style="left:683.3px;top:64.8px;width:1px;height:15px;background:#e3e5ea"></div>
  <div class="abs" style="left:689.7px;top:71.7px;width:119px;height:1.500px;border-radius:1px;background:linear-gradient(90deg,#a4a6ac 0,#a4a6ac 43%,#dfe1e5 43%)"></div>
  <div class="abs" style="left:735.2px;top:66.9px;width:10.800px;height:10.800px;border-radius:50%;background:#101114"></div>
  <div class="t" style="left:826px;top:68.3px;font-size:8.600px;font-weight:700;color:#1e2125">14%</div>
  <svg class="abs" style="left:867px;top:67.1px" width="10.500" height="10.500" viewBox="0 0 10.500 10.500"><rect x=".6" y=".6" width="3.600" height="3.600" rx=".8" fill="none" stroke="#1e2125"/><rect x="6.300" y=".6" width="3.600" height="3.600" rx=".8" fill="none" stroke="#1e2125"/><rect x=".6" y="6.300" width="3.600" height="3.600" rx=".8" fill="none" stroke="#1e2125"/><rect x="6.300" y="6.300" width="3.600" height="3.600" rx=".8" fill="none" stroke="#1e2125"/></svg>
  <svg class="abs" style="left:892px;top:67.3px" width="10" height="10" viewBox="0 0 10 10"><path d="M6.500.7h2.800v2.800M9.300.7L6.300 3.700M3.500 9.300H.7V6.500M.7 9.300l3-3" fill="none" stroke="#1e2125" stroke-width="1" stroke-linecap="round" stroke-linejoin="round"/></svg>
  <svg class="abs" style="left:915px;top:66.5px" width="11.600" height="11.600" viewBox="0 0 11.600 11.600"><circle cx="5.800" cy="5.800" r="5.100" fill="none" stroke="#1e2125" stroke-width="1"/><path d="M4.300 4.600a1.550 1.550 0 113 .5c-.3.700-1.500.8-1.500 1.800" fill="none" stroke="#1e2125" stroke-width="1" stroke-linecap="round"/><circle cx="5.800" cy="8.600" r=".65" fill="#1e2125"/></svg>
  </div>
</div>

<svg class="abs" style="left:259.500px;top:270px" width="8" height="56" viewBox="0 0 8 56"><path d="M0 0c0 6 7.200 8 7.200 13v30c0 5-7.200 7-7.200 13z" fill="#252627"/><path d="M4.600 26.800L2.800 28.800l1.800 2" fill="none" stroke="#e4e5e6" stroke-width=".9" stroke-linecap="round" stroke-linejoin="round"/></svg>
<div class="abs" style="left:1195.500px;top:0;width:4.500px;height:563px;background:#f3f4f6"></div>
<div class="abs" style="left:1189.500px;top:0;width:6px;height:6px;background:radial-gradient(circle at 0 100%,rgba(243,244,246,0) 5.500px,#f3f4f6 6px)"></div>
<div class="abs" style="left:1189.500px;top:555.500px;width:6px;height:6px;background:radial-gradient(circle at 0 0,rgba(243,244,246,0) 5.500px,#f3f4f6 6px)"></div>
<div class="abs" style="left:260px;top:562.200px;width:940px;height:.8px;background:#f3f4f6"></div>
<div class="abs" style="left:0;top:0;width:4px;height:4px;background:radial-gradient(circle at 100% 100%,rgba(255,255,255,0) 3.600px,#fff 4px)"></div>
<div class="abs" style="left:0;top:559px;width:4px;height:4px;background:radial-gradient(circle at 100% 0,rgba(255,255,255,0) 3.600px,#e9eaec 4px)"></div>
</div>
</body>
</html>
